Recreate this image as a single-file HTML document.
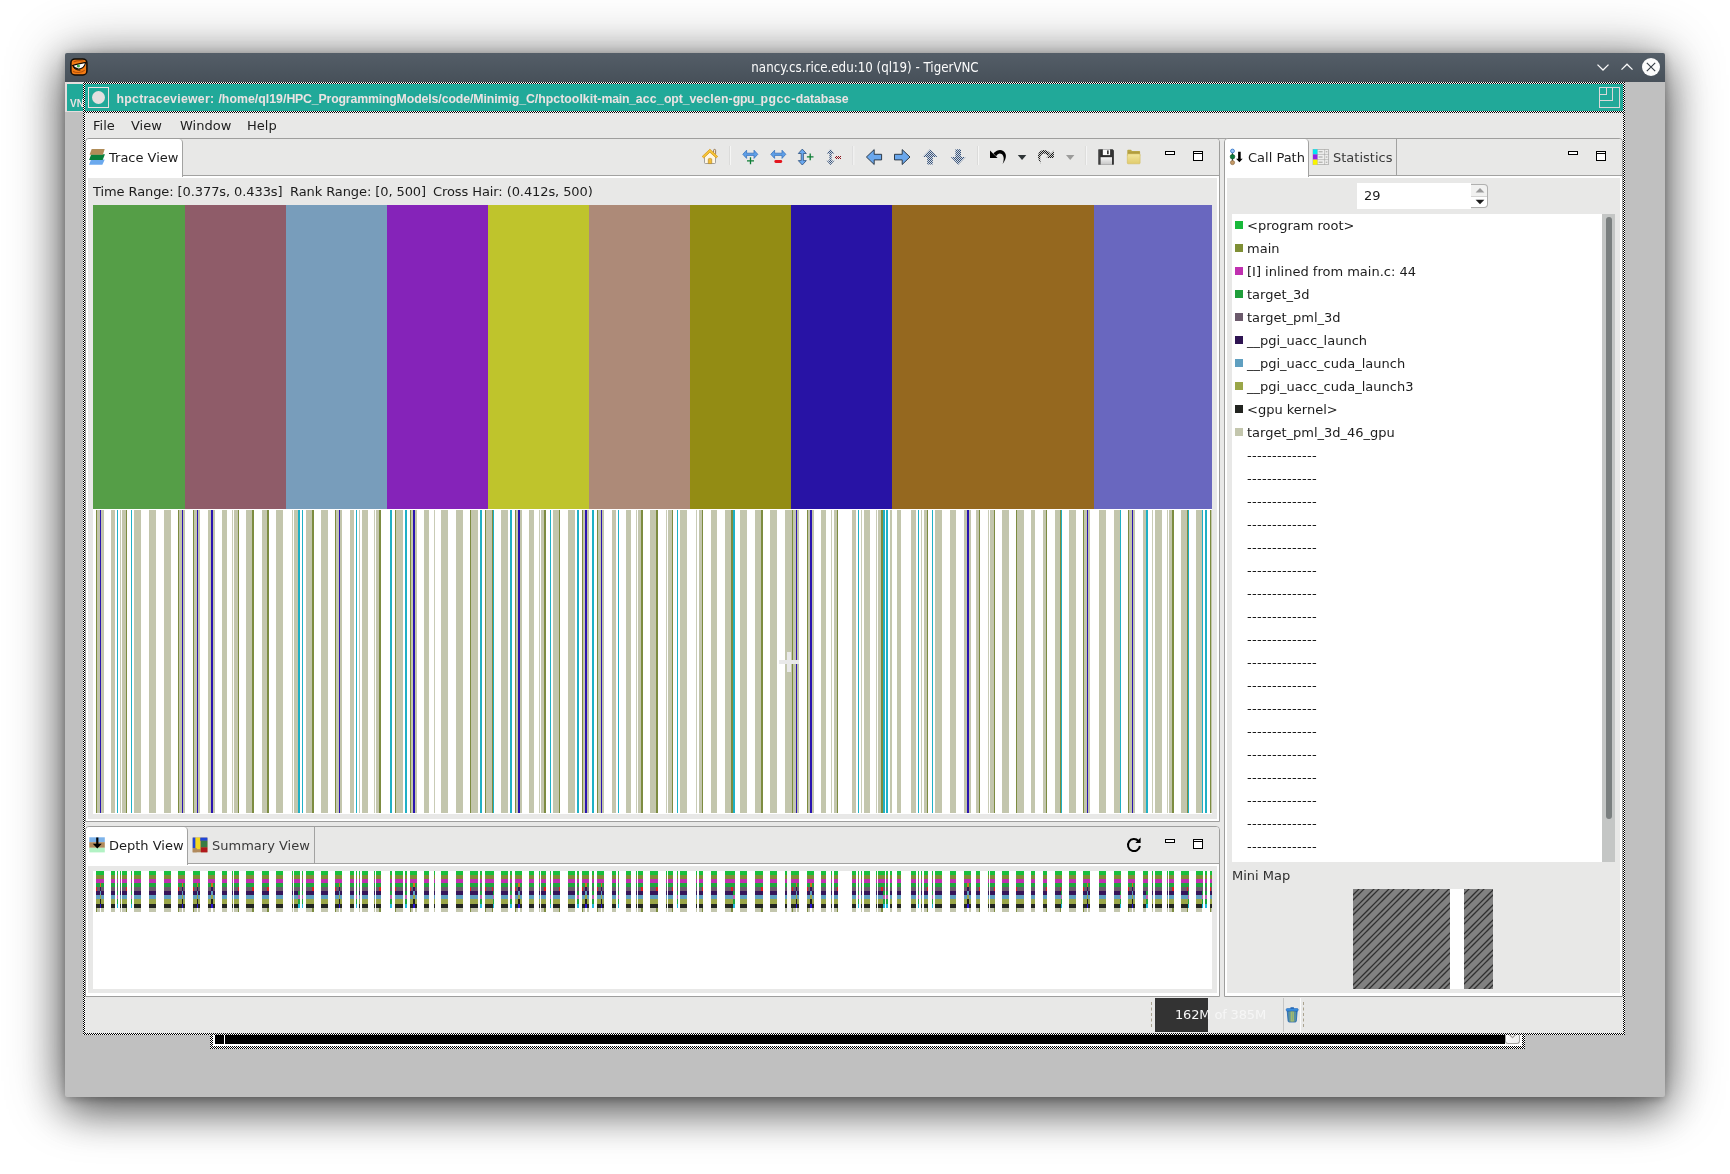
<!DOCTYPE html>
<html><head><meta charset="utf-8"><title>hpctraceviewer</title>
<style>
html,body{margin:0;padding:0}
body{width:1730px;height:1174px;position:relative;overflow:hidden;background:#fff;font-family:"DejaVu Sans","Liberation Sans",sans-serif;font-size:13px;line-height:16px;color:#1c1c1c}
.abs{position:absolute}
.t{position:absolute;white-space:nowrap;margin-top:1px}
.chk{position:absolute;background-image:conic-gradient(#000 25%,#fff 0 50%,#000 0 75%,#fff 0);background-size:2px 2px}
#win{left:65px;top:53px;width:1600px;height:1044px;background:#c0c0c0;border-radius:2px;box-shadow:0 3px 58px rgba(0,0,0,.42),0 14px 40px rgba(0,0,0,.5),0 2px 10px rgba(0,0,0,.25)}
#tbar{left:65px;top:53px;width:1600px;height:29px;border-radius:2px 2px 0 0;background:linear-gradient(#545e68,#475059)}
#ttl{left:65px;top:57px;width:1600px;text-align:center;color:#fcfcfc;font-family:"DejaVu Sans Condensed","Liberation Sans",sans-serif;font-size:13.2px;line-height:20px}
.teal{background:#21a999}
.panel{position:absolute;background:#fff;border:1px solid #9e9e9d;border-radius:4px 4px 0 0;box-sizing:border-box}
.bg{position:absolute;background:#e8e8e7}
.tabline{position:absolute;height:1px;background:#a2a2a1}
.tab{position:absolute;box-sizing:border-box;border-right:1px solid #a2a2a1}
.sq{position:absolute;width:8px;height:8px;left:1235px}
.li{position:absolute;left:1247px;white-space:nowrap;margin-top:1px}
.dash{position:absolute;left:1247px;white-space:nowrap;letter-spacing:.31px;margin-top:1px}
#root{position:absolute;left:0;top:0;width:1730px;height:1174px;will-change:transform}
</style></head><body><div id="root">
<div id="win" class="abs"></div>
<div id="tbar" class="abs"></div>
<div id="ttl" class="t">nancy.cs.rice.edu:10 (ql19) - TigerVNC</div>

<!-- VNC window icon -->
<svg class="abs" style="left:70px;top:58px" width="18" height="18" viewBox="0 0 18 18">
 <rect x="0.9" y="0.9" width="16" height="16" rx="4" fill="#f47c14" stroke="#120c06" stroke-width="1.5"/>
 <path d="M3 13.2 C6 15.2 11.6 15 14.8 12.2 M3.6 4 C6.4 2.6 10 2.4 13.6 3" fill="none" stroke="#b85208" stroke-width="1.1"/>
 <path d="M2.6 7.4 C6 6.2 11 5.6 15.8 4.4 C14.6 8.4 11.6 11.2 8.4 11 C6 10.8 3.8 9.4 2.6 7.4Z" fill="#fff" stroke="#120c06" stroke-width="1.1"/>
 <path d="M3.4 9.4 C5.4 11.6 8 12.4 10.4 12" fill="none" stroke="#120c06" stroke-width="1"/>
 <circle cx="8.4" cy="8" r="1.6" fill="#3cab46"/>
</svg>

<!-- title buttons -->
<svg class="abs" style="left:1590px;top:55px" width="74" height="25" viewBox="0 0 74 25">
 <path d="M7.5 9.6 L13 15 L18.5 9.6" fill="none" stroke="#fcfcfc" stroke-width="1.25"/>
 <path d="M31.5 14.6 L37 9.2 L42.5 14.6" fill="none" stroke="#fcfcfc" stroke-width="1.25"/>
 <circle cx="61" cy="12" r="9" fill="#fcfcfc"/>
 <path d="M56.8 7.8 L65.2 16.2 M65.2 7.8 L56.8 16.2" fill="none" stroke="#343c44" stroke-width="1.1"/>
</svg>

<!-- partial "VN" window at the left -->
<div class="abs" style="left:65px;top:82px;width:20px;height:30px;background:#e6dede"></div>
<div class="abs teal" style="left:67px;top:84px;width:18px;height:27px"></div>
<div class="t" style="left:70px;top:96px;width:13px;overflow:hidden;color:#ece3e3;font:bold 10px/14px 'Liberation Sans',sans-serif">VN</div>

<!-- inner app window -->
<div class="chk" style="left:83px;top:82px;width:1542px;height:953px"></div>
<div class="abs teal" style="left:85px;top:84px;width:1538px;height:27px"></div>
<div class="bg" style="left:85px;top:113px;width:1538px;height:920px"></div>
<!-- window menu button -->
<div class="abs" style="left:88px;top:87px;width:19px;height:19px;border:1px solid #e9e0e0"></div>
<div class="abs" style="left:92px;top:91px;width:13px;height:13px;border-radius:50%;background:#e4e0e0"></div>
<div class="t" style="left:116px;top:90px;width:740px;height:16px;color:#ece3e3;font:bold 12.3px/16px 'Liberation Sans',sans-serif"><span style="position:absolute;left:0.4px;letter-spacing:0.297px">hpctraceviewer:</span><span style="position:absolute;left:102.4px;letter-spacing:0.031px">/home/ql19/</span><span style="position:absolute;left:170.4px;letter-spacing:-0.178px">HPC_</span><span style="position:absolute;left:202.5px;letter-spacing:-0.168px">Programming</span><span style="position:absolute;left:280.6px;letter-spacing:-0.101px">Models/code/</span><span style="position:absolute;left:357.3px;letter-spacing:-0.069px">Minimig_C/</span><span style="position:absolute;left:422.2px;letter-spacing:0.041px">hpctoolkit-</span><span style="position:absolute;left:485.5px;letter-spacing:-0.269px">main_</span><span style="position:absolute;left:519.7px;letter-spacing:0.235px">acc_</span><span style="position:absolute;left:548.0px;letter-spacing:-0.142px">opt_</span><span style="position:absolute;left:573.4px;letter-spacing:0.144px">veclen-</span><span style="position:absolute;left:616.8px;letter-spacing:-0.394px">gpu_</span><span style="position:absolute;left:644.6px;letter-spacing:0.461px">pgcc-</span><span style="position:absolute;left:679.7px;letter-spacing:-0.054px">database</span></div>
<!-- maximize glyph -->
<svg class="abs" style="left:1599px;top:87px" width="22" height="22" viewBox="0 0 22 22" shape-rendering="crispEdges">
 <path d="M.5 .5H20.5V20.5H.5Z M7.5 .5V7.5H.5 M13.5 .5V13.5H.5" fill="none" stroke="#d9d9d9" stroke-width="1"/>
</svg>

<!-- menu bar -->
<div class="t" style="left:93px;top:117px">File</div>
<div class="t" style="left:131px;top:117px">View</div>
<div class="t" style="left:180px;top:117px">Window</div>
<div class="t" style="left:247px;top:117px">Help</div>

<!-- ===== Trace panel ===== -->
<div class="panel" style="left:85px;top:138px;width:1135px;height:684px"></div>
<div class="bg" style="left:86px;top:139px;width:1133px;height:36px;border-radius:3px 3px 0 0"></div>
<div class="tabline" style="left:86px;top:175px;width:1133px"></div>
<div class="bg" style="left:88px;top:178px;width:1129px;height:641px"></div>
<div class="tab" style="left:86px;top:139px;width:97px;height:38px;background:#fff;border-radius:4px 4px 0 0"></div>
<!-- trace view icon -->
<svg class="abs" style="left:88px;top:147px" width="19" height="19" viewBox="88 147 19 19">
 <path d="M91 159.6 H104.7 L102.4 164.8 H89.1Z" fill="#6ba9ee"/>
 <path d="M91.2 154.2 H104.9 L102.7 160 H89.1Z" fill="#07803c"/>
 <path d="M91.7 149 H104.7 L102.9 154.8 H89.5Z" fill="#b08c58"/>
</svg>
<div class="t" style="left:109px;top:149px">Trace View</div>
<svg class="abs" style="left:695px;top:140px" width="525" height="35" viewBox="695 140 525 35">
<defs>
<pattern id="dbl" width="2" height="2" patternUnits="userSpaceOnUse"><rect width="2" height="2" fill="#d4dbe4"/><rect width="1" height="1" fill="#3a5378"/><rect x="1" y="1" width="1" height="1" fill="#3a5378"/></pattern>
<pattern id="dbk" width="2" height="2" patternUnits="userSpaceOnUse"><rect width="1" height="1" fill="#000"/><rect x="1" y="1" width="1" height="1" fill="#000"/></pattern>
<pattern id="drd" width="2" height="2" patternUnits="userSpaceOnUse"><rect width="1" height="1" fill="#8c1018"/><rect x="1" y="1" width="1" height="1" fill="#8c1018"/></pattern>
</defs>
<!-- home -->
<rect x="713.6" y="149.4" width="2" height="5" rx=".9" fill="#fbeedc" stroke="#7d5c34" stroke-width=".8"/>
<path d="M704.5 156.6 L709.9 151.8 L715.5 156.6 V162.6 Q715.5 163.5 714.6 163.5 H705.4 Q704.5 163.5 704.5 162.6Z" fill="#fff7e4" stroke="#8b8b8b" stroke-width=".8"/>
<path d="M708.3 163.6 V159.6 Q708.3 158.4 709.5 158.4 H710.5 Q711.7 158.4 711.7 159.6 V163.6Z" fill="#f3bc34" stroke="#b48a2a" stroke-width=".7"/>
<path d="M702.2 156.5 L709.9 149.2 L717.7 156.5 L716.2 157.9 L709.9 152.2 L703.7 157.9Z" fill="#f5c737" stroke="#d9991f" stroke-width=".8" stroke-linejoin="round"/>
<rect x="729.0" y="146" width="1" height="19" fill="#dbdbda"/><rect x="730.0" y="146" width="1" height="19" fill="#f6f6f5"/>
<path d="M742.8 154.3 L746.5999999999999 150.20000000000002 V153.20000000000002 H754.0 V150.20000000000002 L757.8 154.3 L754.0 158.4 V155.4 H746.5999999999999 V158.4Z" fill="#5e9fe8" stroke="#3a74bc" stroke-width=".8" stroke-linejoin="round"/><path d="M747.0 160.8H754.0M750.5 157.3V164.3" stroke="#0c7d34" stroke-width="1.3" fill="none"/>
<path d="M770.8 154.3 L774.5999999999999 150.20000000000002 V153.20000000000002 H782.0 V150.20000000000002 L785.8 154.3 L782.0 158.4 V155.4 H774.5999999999999 V158.4Z" fill="#5e9fe8" stroke="#3a74bc" stroke-width=".8" stroke-linejoin="round"/><rect x="774.4" y="160.1" width="7.8" height="2.8" rx="1.3" fill="#e3161e"/>
<path d="M802.3 149.1 L806.3 153.5 H803.4 V160.6 H806.3 L802.3 165 L798.3 160.6 H801.1999999999999 V153.5 H798.3Z" fill="#6aa8f0" stroke="#2c4f7c" stroke-width=".8" stroke-linejoin="round"/><path d="M806.9000000000001 156.9H813.5M810.2 153.6V160.20000000000002" stroke="#0c7d34" stroke-width="1.3" fill="none"/>
<path d="M830.5 149.1 L834.5 153.5 H831.6 V160.6 H834.5 L830.5 165 L826.5 160.6 H829.4 V153.5 H826.5Z" fill="url(#dbl)" stroke="none" stroke-width=".8" stroke-linejoin="round"/><rect x="835" y="156" width="6" height="3" fill="url(#drd)"/>
<rect x="852.3" y="146" width="1" height="19" fill="#dbdbda"/><rect x="853.3" y="146" width="1" height="19" fill="#f6f6f5"/>
<path d="M866.4 157 L874.2 149.6 V154.3 H881.6 V159.9 H874.2 V164.5Z" fill="#6aa7ec" stroke="#232c38" stroke-width=".9" stroke-linejoin="miter"/>
<path d="M910 157 L902.2 149.6 V154.3 H894.5 V159.9 H902.2 V164.5Z" fill="#6aa7ec" stroke="#232c38" stroke-width=".9" stroke-linejoin="miter"/>
<path d="M930 149.3 L937.4 157 H932.8 V164.6 H927.2 V157 H922.6Z" fill="url(#dbl)"/>
<path d="M958.2 164.8 L965.6 157 H961 V149.2 H955.4 V157 H950.8Z" fill="url(#dbl)"/>
<rect x="977.0" y="146" width="1" height="19" fill="#dbdbda"/><rect x="978.0" y="146" width="1" height="19" fill="#f6f6f5"/>
<g id="undo"><path d="M990 150.4 V158.1 H997.6Z" fill="#000"/><path d="M993.4 153.6 C996 150.4 1000 149 1003.2 150.9 C1006.8 153.2 1007 158.2 1002.6 163.9 C1004.4 159.2 1004 155.6 1001.6 154 C999.6 152.8 997.6 153.8 996.2 156.2Z" fill="#000"/></g>
<path d="M1017.8 155 H1026.3 L1022.05 160.1Z" fill="#2e3436"/>
<g transform="translate(2043.9,0) scale(-1,1)"><path d="M990 150.4 V158.1 H997.6Z" fill="url(#dbk)"/><path d="M993.4 153.6 C996 150.4 1000 149 1003.2 150.9 C1006.8 153.2 1007 158.2 1002.6 163.9 C1004.4 159.2 1004 155.6 1001.6 154 C999.6 152.8 997.6 153.8 996.2 156.2Z" fill="url(#dbk)"/></g>
<path d="M1066 155 H1074.4 L1070.2 160.1Z" fill="#9b9b9a"/>
<rect x="1084.9" y="146" width="1" height="19" fill="#dbdbda"/><rect x="1085.9" y="146" width="1" height="19" fill="#f6f6f5"/>
<!-- save -->
<defs><linearGradient id="fl" x1="0" x2="1"><stop offset="0" stop-color="#4a4a4a"/><stop offset=".25" stop-color="#2a2a2a"/><stop offset="1" stop-color="#353535"/></linearGradient>
<linearGradient id="lb" x1="0" x2="0" y1="0" y2="1"><stop offset="0" stop-color="#f6f6f6"/><stop offset="1" stop-color="#c4c4c4"/></linearGradient>
<linearGradient id="fd" x1="0" x2="0" y1="0" y2="1"><stop offset="0" stop-color="#f3e69c"/><stop offset="1" stop-color="#e0cb6c"/></linearGradient></defs>
<path d="M1098.7 149.2 H1112.6 L1113.9 150.5 V164.2 Q1113.9 164.8 1113.3 164.8 H1098.8 Q1098.2 164.8 1098.2 164.2 V149.8 Q1098.2 149.2 1098.7 149.2Z" fill="url(#fl)"/>
<rect x="1102.8" y="149.4" width="7.3" height="5.7" fill="#fbfbfb"/>
<rect x="1107" y="150.4" width="1.7" height="3.8" fill="#3a3a3a"/>
<rect x="1100.6" y="157.2" width="11.4" height="7.6" fill="url(#lb)"/>
<!-- folder -->
<path d="M1127.3 150.6 Q1127.3 149.8 1128.1 149.8 H1131 L1132 151 H1139.4 Q1140.1 151 1140.1 151.8 V156 H1127.3Z" fill="#b9a645"/>
<path d="M1128.2 152.2 H1139.2 V155 H1128.2Z" fill="#a89436" opacity=".55"/>
<rect x="1127.3" y="153.9" width="12.8" height="9.9" rx=".8" fill="url(#fd)" stroke="#d2bc5e" stroke-width=".6"/>
<!-- min / max -->
<rect x="1165.5" y="151.5" width="9" height="3" fill="#fff" stroke="#000" stroke-width="1"/>
<rect x="1193.5" y="151.5" width="9" height="9" fill="#fff" stroke="#000" stroke-width="1"/>
<rect x="1193" y="153" width="10" height="1" fill="#000"/>
</svg>

<div class="t" style="left:93px;top:183px;letter-spacing:-.09px">Time Range: [0.377s, 0.433s]</div>
<div class="t" style="left:290px;top:183px;letter-spacing:-.09px">Rank Range: [0, 500]</div>
<div class="t" style="left:433px;top:183px;letter-spacing:-.09px">Cross Hair: (0.412s, 500)</div>

<!-- trace canvas -->
<div class="abs" style="left:93px;top:205px;width:1119px;height:609px;background:#fff"></div>
<div class="abs" style="left:93px;top:205px;width:92px;height:304px;background:#559e47"></div>
<div class="abs" style="left:185px;top:205px;width:101px;height:304px;background:#8f5c69"></div>
<div class="abs" style="left:286px;top:205px;width:101px;height:304px;background:#789dbb"></div>
<div class="abs" style="left:387px;top:205px;width:101px;height:304px;background:#8523b9"></div>
<div class="abs" style="left:488px;top:205px;width:101px;height:304px;background:#bfc42c"></div>
<div class="abs" style="left:589px;top:205px;width:101px;height:304px;background:#ad8a78"></div>
<div class="abs" style="left:690px;top:205px;width:101px;height:304px;background:#938c14"></div>
<div class="abs" style="left:791px;top:205px;width:101px;height:304px;background:#2813a5"></div>
<div class="abs" style="left:892px;top:205px;width:202px;height:304px;background:#95681f"></div>
<div class="abs" style="left:1094px;top:205px;width:118px;height:304px;background:#6967bf"></div>
<svg class="abs" style="left:93px;top:510px" width="1119" height="303" shape-rendering="crispEdges"><rect x="4" y="0" width="7" height="303" fill="#c3c6ad"/><rect x="18" y="0" width="4" height="303" fill="#c3c6ad"/><rect x="27" y="0" width="1" height="303" fill="#c9ccb6"/><rect x="29" y="0" width="4" height="303" fill="#c3c6ad"/><rect x="41" y="0" width="7" height="303" fill="#c3c6ad"/><rect x="56" y="0" width="7" height="303" fill="#c3c6ad"/><rect x="71" y="0" width="7" height="303" fill="#c3c6ad"/><rect x="86" y="0" width="6" height="303" fill="#c3c6ad"/><rect x="101" y="0" width="6" height="303" fill="#c3c6ad"/><rect x="115" y="0" width="7" height="303" fill="#c3c6ad"/><rect x="129" y="0" width="5" height="303" fill="#c3c6ad"/><rect x="139" y="0" width="1" height="303" fill="#c9ccb6"/><rect x="141" y="0" width="4" height="303" fill="#c3c6ad"/><rect x="153" y="0" width="6" height="303" fill="#c3c6ad"/><rect x="169" y="0" width="5" height="303" fill="#c3c6ad"/><rect x="183" y="0" width="7" height="303" fill="#c3c6ad"/><rect x="199" y="0" width="1" height="303" fill="#c9ccb6"/><rect x="201" y="0" width="4" height="303" fill="#c3c6ad"/><rect x="213" y="0" width="6" height="303" fill="#c3c6ad"/><rect x="228" y="0" width="7" height="303" fill="#c3c6ad"/><rect x="243" y="0" width="6" height="303" fill="#c3c6ad"/><rect x="257" y="0" width="4" height="303" fill="#c3c6ad"/><rect x="266" y="0" width="1" height="303" fill="#c9ccb6"/><rect x="269" y="0" width="6" height="303" fill="#c3c6ad"/><rect x="281" y="0" width="1" height="303" fill="#c9ccb6"/><rect x="283" y="0" width="3" height="303" fill="#c3c6ad"/><rect x="303" y="0" width="7" height="303" fill="#c3c6ad"/><rect x="318" y="0" width="6" height="303" fill="#c3c6ad"/><rect x="331" y="0" width="5" height="303" fill="#c3c6ad"/><rect x="341" y="0" width="1" height="303" fill="#c9ccb6"/><rect x="348" y="0" width="7" height="303" fill="#c3c6ad"/><rect x="363" y="0" width="7" height="303" fill="#c3c6ad"/><rect x="378" y="0" width="7" height="303" fill="#c3c6ad"/><rect x="393" y="0" width="6" height="303" fill="#c3c6ad"/><rect x="408" y="0" width="7" height="303" fill="#c3c6ad"/><rect x="423" y="0" width="6" height="303" fill="#c3c6ad"/><rect x="436" y="0" width="5" height="303" fill="#c3c6ad"/><rect x="446" y="0" width="1" height="303" fill="#c9ccb6"/><rect x="448" y="0" width="3" height="303" fill="#c3c6ad"/><rect x="460" y="0" width="6" height="303" fill="#c3c6ad"/><rect x="475" y="0" width="7" height="303" fill="#c3c6ad"/><rect x="490" y="0" width="6" height="303" fill="#c3c6ad"/><rect x="505" y="0" width="6" height="303" fill="#c3c6ad"/><rect x="519" y="0" width="4" height="303" fill="#c3c6ad"/><rect x="533" y="0" width="5" height="303" fill="#c3c6ad"/><rect x="543" y="0" width="1" height="303" fill="#c9ccb6"/><rect x="545" y="0" width="3" height="303" fill="#c3c6ad"/><rect x="557" y="0" width="6" height="303" fill="#c3c6ad"/><rect x="573" y="0" width="1" height="303" fill="#c9ccb6"/><rect x="575" y="0" width="4" height="303" fill="#c3c6ad"/><rect x="587" y="0" width="7" height="303" fill="#c3c6ad"/><rect x="603" y="0" width="1" height="303" fill="#c9ccb6"/><rect x="606" y="0" width="3" height="303" fill="#c3c6ad"/><rect x="618" y="0" width="6" height="303" fill="#c3c6ad"/><rect x="632" y="0" width="6" height="303" fill="#c3c6ad"/><rect x="647" y="0" width="7" height="303" fill="#c3c6ad"/><rect x="662" y="0" width="6" height="303" fill="#c3c6ad"/><rect x="677" y="0" width="7" height="303" fill="#c3c6ad"/><rect x="692" y="0" width="14" height="303" fill="#c3c6ad"/><rect x="715" y="0" width="6" height="303" fill="#c3c6ad"/><rect x="728" y="0" width="5" height="303" fill="#c3c6ad"/><rect x="738" y="0" width="1" height="303" fill="#c9ccb6"/><rect x="741" y="0" width="3" height="303" fill="#c3c6ad"/><rect x="759" y="0" width="4" height="303" fill="#c3c6ad"/><rect x="768" y="0" width="1" height="303" fill="#c9ccb6"/><rect x="771" y="0" width="6" height="303" fill="#c3c6ad"/><rect x="783" y="0" width="1" height="303" fill="#c9ccb6"/><rect x="785" y="0" width="3" height="303" fill="#c3c6ad"/><rect x="797" y="0" width="2" height="303" fill="#c3c6ad"/><rect x="804" y="0" width="4" height="303" fill="#c3c6ad"/><rect x="818" y="0" width="5" height="303" fill="#c3c6ad"/><rect x="828" y="0" width="1" height="303" fill="#c9ccb6"/><rect x="831" y="0" width="3" height="303" fill="#c3c6ad"/><rect x="842" y="0" width="7" height="303" fill="#c3c6ad"/><rect x="857" y="0" width="6" height="303" fill="#c3c6ad"/><rect x="871" y="0" width="7" height="303" fill="#c3c6ad"/><rect x="883" y="0" width="3" height="303" fill="#c3c6ad"/><rect x="895" y="0" width="1" height="303" fill="#c9ccb6"/><rect x="897" y="0" width="4" height="303" fill="#c3c6ad"/><rect x="909" y="0" width="7" height="303" fill="#c3c6ad"/><rect x="924" y="0" width="7" height="303" fill="#c3c6ad"/><rect x="938" y="0" width="4" height="303" fill="#c3c6ad"/><rect x="950" y="0" width="3" height="303" fill="#c3c6ad"/><rect x="962" y="0" width="5" height="303" fill="#c3c6ad"/><rect x="976" y="0" width="7" height="303" fill="#c3c6ad"/><rect x="991" y="0" width="6" height="303" fill="#c3c6ad"/><rect x="1006" y="0" width="7" height="303" fill="#c3c6ad"/><rect x="1021" y="0" width="6" height="303" fill="#c3c6ad"/><rect x="1036" y="0" width="6" height="303" fill="#c3c6ad"/><rect x="1050" y="0" width="3" height="303" fill="#c3c6ad"/><rect x="1059" y="0" width="1" height="303" fill="#c9ccb6"/><rect x="1062" y="0" width="7" height="303" fill="#c3c6ad"/><rect x="1074" y="0" width="1" height="303" fill="#c9ccb6"/><rect x="1076" y="0" width="3" height="303" fill="#c3c6ad"/><rect x="1088" y="0" width="6" height="303" fill="#c3c6ad"/><rect x="1103" y="0" width="6" height="303" fill="#c3c6ad"/><rect x="1118" y="0" width="1" height="303" fill="#c3c6ad"/><rect x="3" y="0" width="1" height="303" fill="#7d8c41"/><rect x="33" y="0" width="1" height="303" fill="#7d8c41"/><rect x="85" y="0" width="1" height="303" fill="#7d8c41"/><rect x="100" y="0" width="1" height="303" fill="#7d8c41"/><rect x="145" y="0" width="1" height="303" fill="#7d8c41"/><rect x="159" y="0" width="2" height="303" fill="#7d8c41"/><rect x="174" y="0" width="2" height="303" fill="#7d8c41"/><rect x="219" y="0" width="2" height="303" fill="#7d8c41"/><rect x="242" y="0" width="1" height="303" fill="#7d8c41"/><rect x="286" y="0" width="2" height="303" fill="#7d8c41"/><rect x="302" y="0" width="1" height="303" fill="#7d8c41"/><rect x="317" y="0" width="1" height="303" fill="#7d8c41"/><rect x="377" y="0" width="1" height="303" fill="#7d8c41"/><rect x="392" y="0" width="1" height="303" fill="#7d8c41"/><rect x="399" y="0" width="1" height="303" fill="#7d8c41"/><rect x="422" y="0" width="1" height="303" fill="#7d8c41"/><rect x="451" y="0" width="2" height="303" fill="#7d8c41"/><rect x="466" y="0" width="1" height="303" fill="#7d8c41"/><rect x="489" y="0" width="1" height="303" fill="#7d8c41"/><rect x="504" y="0" width="1" height="303" fill="#7d8c41"/><rect x="548" y="0" width="2" height="303" fill="#7d8c41"/><rect x="563" y="0" width="2" height="303" fill="#7d8c41"/><rect x="579" y="0" width="1" height="303" fill="#7d8c41"/><rect x="609" y="0" width="1" height="303" fill="#7d8c41"/><rect x="638" y="0" width="2" height="303" fill="#7d8c41"/><rect x="668" y="0" width="2" height="303" fill="#7d8c41"/><rect x="699" y="0" width="1" height="303" fill="#7d8c41"/><rect x="714" y="0" width="1" height="303" fill="#7d8c41"/><rect x="744" y="0" width="1" height="303" fill="#7d8c41"/><rect x="788" y="0" width="2" height="303" fill="#7d8c41"/><rect x="834" y="0" width="1" height="303" fill="#7d8c41"/><rect x="886" y="0" width="1" height="303" fill="#7d8c41"/><rect x="901" y="0" width="1" height="303" fill="#7d8c41"/><rect x="923" y="0" width="1" height="303" fill="#7d8c41"/><rect x="953" y="0" width="1" height="303" fill="#7d8c41"/><rect x="967" y="0" width="1" height="303" fill="#7d8c41"/><rect x="990" y="0" width="1" height="303" fill="#7d8c41"/><rect x="1035" y="0" width="1" height="303" fill="#7d8c41"/><rect x="1079" y="0" width="2" height="303" fill="#7d8c41"/><rect x="1094" y="0" width="1" height="303" fill="#7d8c41"/><rect x="1117" y="0" width="1" height="303" fill="#7d8c41"/><rect x="24" y="0" width="1" height="303" fill="#1fb0c5"/><rect x="38" y="0" width="1" height="303" fill="#1fb0c5"/><rect x="205" y="0" width="2" height="303" fill="#1fb0c5"/><rect x="209" y="0" width="1" height="303" fill="#1fb0c5"/><rect x="263" y="0" width="1" height="303" fill="#1fb0c5"/><rect x="297" y="0" width="2" height="303" fill="#1fb0c5"/><rect x="312" y="0" width="2" height="303" fill="#1fb0c5"/><rect x="387" y="0" width="2" height="303" fill="#1fb0c5"/><rect x="400" y="0" width="1" height="303" fill="#1fb0c5"/><rect x="417" y="0" width="2" height="303" fill="#1fb0c5"/><rect x="457" y="0" width="1" height="303" fill="#1fb0c5"/><rect x="484" y="0" width="2" height="303" fill="#1fb0c5"/><rect x="499" y="0" width="2" height="303" fill="#1fb0c5"/><rect x="525" y="0" width="1" height="303" fill="#1fb0c5"/><rect x="584" y="0" width="1" height="303" fill="#1fb0c5"/><rect x="640" y="0" width="2" height="303" fill="#1fb0c5"/><rect x="765" y="0" width="1" height="303" fill="#1fb0c5"/><rect x="790" y="0" width="2" height="303" fill="#1fb0c5"/><rect x="793" y="0" width="2" height="303" fill="#1fb0c5"/><rect x="825" y="0" width="1" height="303" fill="#1fb0c5"/><rect x="839" y="0" width="1" height="303" fill="#1fb0c5"/><rect x="968" y="0" width="1" height="303" fill="#1fb0c5"/><rect x="1027" y="0" width="1" height="303" fill="#1fb0c5"/><rect x="1053" y="0" width="2" height="303" fill="#1fb0c5"/><rect x="1095" y="0" width="1" height="303" fill="#1fb0c5"/><rect x="1109" y="0" width="1" height="303" fill="#1fb0c5"/><rect x="1112" y="0" width="2" height="303" fill="#1fb0c5"/><rect x="7" y="0" width="1" height="303" fill="#2a14b0"/><rect x="89" y="0" width="1" height="303" fill="#2a14b0"/><rect x="104" y="0" width="1" height="303" fill="#2a14b0"/><rect x="118" y="0" width="2" height="303" fill="#2a14b0"/><rect x="246" y="0" width="1" height="303" fill="#2a14b0"/><rect x="320" y="0" width="2" height="303" fill="#2a14b0"/><rect x="425" y="0" width="2" height="303" fill="#2a14b0"/><rect x="492" y="0" width="2" height="303" fill="#2a14b0"/><rect x="508" y="0" width="1" height="303" fill="#2a14b0"/><rect x="703" y="0" width="1" height="303" fill="#2a14b0"/><rect x="717" y="0" width="2" height="303" fill="#2a14b0"/><rect x="874" y="0" width="2" height="303" fill="#2a14b0"/><rect x="994" y="0" width="1" height="303" fill="#2a14b0"/><rect x="1039" y="0" width="1" height="303" fill="#2a14b0"/></svg>
<!-- crosshair -->
<div class="abs" style="left:787px;top:652px;width:4px;height:20px;background:#e9e9e9"></div>
<div class="abs" style="left:779px;top:660px;width:20px;height:4px;background:#e9e9e9"></div>

<div class="abs" style="left:1215px;top:138px;width:14px;height:1px;background:#a2a2a1"></div>
<!-- ===== Depth panel ===== -->
<div class="panel" style="left:85px;top:826px;width:1135px;height:171px"></div>
<div class="bg" style="left:86px;top:827px;width:1133px;height:36px;border-radius:3px 3px 0 0"></div>
<div class="tabline" style="left:86px;top:863px;width:1133px"></div>
<div class="bg" style="left:88px;top:866px;width:1129px;height:127px"></div>
<div class="tab" style="left:86px;top:827px;width:102px;height:38px;background:#fff;border-radius:4px 4px 0 0"></div>
<div class="tab" style="left:188px;top:827px;width:127px;height:36px"></div>
<svg class="abs" style="left:89px;top:837px" width="120" height="16" viewBox="89 837 120 16">
<rect x="89.3" y="837.3" width="15.5" height="5" fill="#7db3ea"/>
<rect x="89.3" y="842.2" width="15.5" height="5.6" fill="#b18a5c"/>
<rect x="89.3" y="847.8" width="15.5" height="4.6" fill="#b2f2c4"/>
<path d="M96.2 837.6 H98.4 V843.8 H101.8 L97.3 848.6 L92.8 843.8 H96.2Z" fill="#000"/>
<!-- summary -->
<rect x="192.7" y="837.6" width="14.7" height="14.7" fill="#b18a5c"/>
<rect x="192.7" y="837.6" width="2.8" height="10.4" fill="#1f46d8"/>
<rect x="195.5" y="837.6" width="4.8" height="11.6" fill="#f2d820"/>
<rect x="200.3" y="837.6" width="7.1" height="3.2" fill="#1f46d8"/>
<rect x="200.9" y="840.8" width="6.5" height="6.6" fill="#3a7c44"/>
<rect x="200.9" y="847.4" width="6.5" height="4.9" fill="#b0181c"/>
<rect x="192.7" y="848" width="4" height="4.3" fill="#b18a5c"/>
</svg><svg class="abs" style="left:1125px;top:836px" width="18" height="18" viewBox="1125 836 18 18">
<path d="M1138.4 841 A6 6 0 1 0 1139.9 846" fill="none" stroke="#000" stroke-width="2"/>
<path d="M1135.4 843 H1140.6 V837.6Z" fill="#000"/>
</svg><svg class="abs" style="left:1164px;top:838px" width="41" height="13" viewBox="1164 838 41 13">
<rect x="1165.5" y="839.5" width="9" height="3" fill="#fff" stroke="#000"/>
<rect x="1193.5" y="839.5" width="9" height="9" fill="#fff" stroke="#000"/><rect x="1193" y="841" width="10" height="1" fill="#000"/></svg>
<div class="t" style="left:109px;top:837px">Depth View</div>
<div class="t" style="left:212px;top:837px;color:#3a3a3a">Summary View</div>
<div class="abs" style="left:93px;top:871px;width:1119px;height:118px;background:#fff"></div>
<svg class="abs" style="left:93px;top:871px" width="1119" height="41" shape-rendering="crispEdges"><rect x="3" y="0" width="8" height="4" fill="#18c03c"/><rect x="18" y="0" width="4" height="4" fill="#18c03c"/><rect x="24" y="0" width="1" height="4" fill="#18c03c"/><rect x="27" y="0" width="1" height="4" fill="#18c03c"/><rect x="29" y="0" width="5" height="4" fill="#18c03c"/><rect x="38" y="0" width="1" height="4" fill="#18c03c"/><rect x="41" y="0" width="7" height="4" fill="#18c03c"/><rect x="56" y="0" width="7" height="4" fill="#18c03c"/><rect x="71" y="0" width="7" height="4" fill="#18c03c"/><rect x="85" y="0" width="7" height="4" fill="#18c03c"/><rect x="100" y="0" width="7" height="4" fill="#18c03c"/><rect x="115" y="0" width="7" height="4" fill="#18c03c"/><rect x="129" y="0" width="5" height="4" fill="#18c03c"/><rect x="139" y="0" width="1" height="4" fill="#18c03c"/><rect x="141" y="0" width="5" height="4" fill="#18c03c"/><rect x="153" y="0" width="8" height="4" fill="#18c03c"/><rect x="169" y="0" width="7" height="4" fill="#18c03c"/><rect x="183" y="0" width="7" height="4" fill="#18c03c"/><rect x="199" y="0" width="1" height="4" fill="#18c03c"/><rect x="201" y="0" width="6" height="4" fill="#18c03c"/><rect x="209" y="0" width="1" height="4" fill="#18c03c"/><rect x="213" y="0" width="8" height="4" fill="#18c03c"/><rect x="228" y="0" width="7" height="4" fill="#18c03c"/><rect x="242" y="0" width="7" height="4" fill="#18c03c"/><rect x="257" y="0" width="4" height="4" fill="#18c03c"/><rect x="263" y="0" width="1" height="4" fill="#18c03c"/><rect x="266" y="0" width="1" height="4" fill="#18c03c"/><rect x="269" y="0" width="6" height="4" fill="#18c03c"/><rect x="281" y="0" width="1" height="4" fill="#18c03c"/><rect x="283" y="0" width="5" height="4" fill="#18c03c"/><rect x="297" y="0" width="2" height="4" fill="#18c03c"/><rect x="302" y="0" width="8" height="4" fill="#18c03c"/><rect x="312" y="0" width="2" height="4" fill="#18c03c"/><rect x="317" y="0" width="7" height="4" fill="#18c03c"/><rect x="331" y="0" width="5" height="4" fill="#18c03c"/><rect x="341" y="0" width="1" height="4" fill="#18c03c"/><rect x="348" y="0" width="7" height="4" fill="#18c03c"/><rect x="363" y="0" width="7" height="4" fill="#18c03c"/><rect x="377" y="0" width="8" height="4" fill="#18c03c"/><rect x="387" y="0" width="2" height="4" fill="#18c03c"/><rect x="392" y="0" width="9" height="4" fill="#18c03c"/><rect x="408" y="0" width="7" height="4" fill="#18c03c"/><rect x="417" y="0" width="2" height="4" fill="#18c03c"/><rect x="422" y="0" width="7" height="4" fill="#18c03c"/><rect x="436" y="0" width="5" height="4" fill="#18c03c"/><rect x="446" y="0" width="1" height="4" fill="#18c03c"/><rect x="448" y="0" width="5" height="4" fill="#18c03c"/><rect x="457" y="0" width="1" height="4" fill="#18c03c"/><rect x="460" y="0" width="7" height="4" fill="#18c03c"/><rect x="475" y="0" width="7" height="4" fill="#18c03c"/><rect x="484" y="0" width="2" height="4" fill="#18c03c"/><rect x="489" y="0" width="7" height="4" fill="#18c03c"/><rect x="499" y="0" width="2" height="4" fill="#18c03c"/><rect x="504" y="0" width="7" height="4" fill="#18c03c"/><rect x="519" y="0" width="4" height="4" fill="#18c03c"/><rect x="525" y="0" width="1" height="4" fill="#18c03c"/><rect x="533" y="0" width="5" height="4" fill="#18c03c"/><rect x="543" y="0" width="1" height="4" fill="#18c03c"/><rect x="545" y="0" width="5" height="4" fill="#18c03c"/><rect x="557" y="0" width="8" height="4" fill="#18c03c"/><rect x="573" y="0" width="1" height="4" fill="#18c03c"/><rect x="575" y="0" width="5" height="4" fill="#18c03c"/><rect x="584" y="0" width="1" height="4" fill="#18c03c"/><rect x="587" y="0" width="7" height="4" fill="#18c03c"/><rect x="603" y="0" width="1" height="4" fill="#18c03c"/><rect x="606" y="0" width="4" height="4" fill="#18c03c"/><rect x="618" y="0" width="6" height="4" fill="#18c03c"/><rect x="632" y="0" width="10" height="4" fill="#18c03c"/><rect x="647" y="0" width="7" height="4" fill="#18c03c"/><rect x="662" y="0" width="8" height="4" fill="#18c03c"/><rect x="677" y="0" width="7" height="4" fill="#18c03c"/><rect x="692" y="0" width="14" height="4" fill="#18c03c"/><rect x="714" y="0" width="7" height="4" fill="#18c03c"/><rect x="728" y="0" width="5" height="4" fill="#18c03c"/><rect x="738" y="0" width="1" height="4" fill="#18c03c"/><rect x="741" y="0" width="4" height="4" fill="#18c03c"/><rect x="759" y="0" width="4" height="4" fill="#18c03c"/><rect x="765" y="0" width="1" height="4" fill="#18c03c"/><rect x="768" y="0" width="1" height="4" fill="#18c03c"/><rect x="771" y="0" width="6" height="4" fill="#18c03c"/><rect x="783" y="0" width="1" height="4" fill="#18c03c"/><rect x="785" y="0" width="7" height="4" fill="#18c03c"/><rect x="793" y="0" width="2" height="4" fill="#18c03c"/><rect x="797" y="0" width="2" height="4" fill="#18c03c"/><rect x="804" y="0" width="4" height="4" fill="#18c03c"/><rect x="818" y="0" width="5" height="4" fill="#18c03c"/><rect x="825" y="0" width="1" height="4" fill="#18c03c"/><rect x="828" y="0" width="1" height="4" fill="#18c03c"/><rect x="831" y="0" width="4" height="4" fill="#18c03c"/><rect x="839" y="0" width="1" height="4" fill="#18c03c"/><rect x="842" y="0" width="7" height="4" fill="#18c03c"/><rect x="857" y="0" width="6" height="4" fill="#18c03c"/><rect x="871" y="0" width="7" height="4" fill="#18c03c"/><rect x="883" y="0" width="4" height="4" fill="#18c03c"/><rect x="895" y="0" width="1" height="4" fill="#18c03c"/><rect x="897" y="0" width="5" height="4" fill="#18c03c"/><rect x="909" y="0" width="7" height="4" fill="#18c03c"/><rect x="923" y="0" width="8" height="4" fill="#18c03c"/><rect x="938" y="0" width="4" height="4" fill="#18c03c"/><rect x="950" y="0" width="4" height="4" fill="#18c03c"/><rect x="962" y="0" width="7" height="4" fill="#18c03c"/><rect x="976" y="0" width="7" height="4" fill="#18c03c"/><rect x="990" y="0" width="7" height="4" fill="#18c03c"/><rect x="1006" y="0" width="7" height="4" fill="#18c03c"/><rect x="1021" y="0" width="7" height="4" fill="#18c03c"/><rect x="1035" y="0" width="7" height="4" fill="#18c03c"/><rect x="1050" y="0" width="5" height="4" fill="#18c03c"/><rect x="1059" y="0" width="1" height="4" fill="#18c03c"/><rect x="1062" y="0" width="7" height="4" fill="#18c03c"/><rect x="1074" y="0" width="1" height="4" fill="#18c03c"/><rect x="1076" y="0" width="5" height="4" fill="#18c03c"/><rect x="1088" y="0" width="8" height="4" fill="#18c03c"/><rect x="1103" y="0" width="7" height="4" fill="#18c03c"/><rect x="1112" y="0" width="2" height="4" fill="#18c03c"/><rect x="1117" y="0" width="2" height="4" fill="#18c03c"/><rect x="3" y="4" width="8" height="4" fill="#7f8f35"/><rect x="18" y="4" width="4" height="4" fill="#7f8f35"/><rect x="24" y="4" width="1" height="4" fill="#7f8f35"/><rect x="27" y="4" width="1" height="4" fill="#7f8f35"/><rect x="29" y="4" width="5" height="4" fill="#7f8f35"/><rect x="38" y="4" width="1" height="4" fill="#7f8f35"/><rect x="41" y="4" width="7" height="4" fill="#7f8f35"/><rect x="56" y="4" width="7" height="4" fill="#7f8f35"/><rect x="71" y="4" width="7" height="4" fill="#7f8f35"/><rect x="85" y="4" width="7" height="4" fill="#7f8f35"/><rect x="100" y="4" width="7" height="4" fill="#7f8f35"/><rect x="115" y="4" width="7" height="4" fill="#7f8f35"/><rect x="129" y="4" width="5" height="4" fill="#7f8f35"/><rect x="139" y="4" width="1" height="4" fill="#7f8f35"/><rect x="141" y="4" width="5" height="4" fill="#7f8f35"/><rect x="153" y="4" width="8" height="4" fill="#7f8f35"/><rect x="169" y="4" width="7" height="4" fill="#7f8f35"/><rect x="183" y="4" width="7" height="4" fill="#7f8f35"/><rect x="199" y="4" width="1" height="4" fill="#7f8f35"/><rect x="201" y="4" width="6" height="4" fill="#7f8f35"/><rect x="209" y="4" width="1" height="4" fill="#7f8f35"/><rect x="213" y="4" width="8" height="4" fill="#7f8f35"/><rect x="228" y="4" width="7" height="4" fill="#7f8f35"/><rect x="242" y="4" width="7" height="4" fill="#7f8f35"/><rect x="257" y="4" width="4" height="4" fill="#7f8f35"/><rect x="263" y="4" width="1" height="4" fill="#7f8f35"/><rect x="266" y="4" width="1" height="4" fill="#7f8f35"/><rect x="269" y="4" width="6" height="4" fill="#7f8f35"/><rect x="281" y="4" width="1" height="4" fill="#7f8f35"/><rect x="283" y="4" width="5" height="4" fill="#7f8f35"/><rect x="297" y="4" width="2" height="4" fill="#7f8f35"/><rect x="302" y="4" width="8" height="4" fill="#7f8f35"/><rect x="312" y="4" width="2" height="4" fill="#7f8f35"/><rect x="317" y="4" width="7" height="4" fill="#7f8f35"/><rect x="331" y="4" width="5" height="4" fill="#7f8f35"/><rect x="341" y="4" width="1" height="4" fill="#7f8f35"/><rect x="348" y="4" width="7" height="4" fill="#7f8f35"/><rect x="363" y="4" width="7" height="4" fill="#7f8f35"/><rect x="377" y="4" width="8" height="4" fill="#7f8f35"/><rect x="387" y="4" width="2" height="4" fill="#7f8f35"/><rect x="392" y="4" width="9" height="4" fill="#7f8f35"/><rect x="408" y="4" width="7" height="4" fill="#7f8f35"/><rect x="417" y="4" width="2" height="4" fill="#7f8f35"/><rect x="422" y="4" width="7" height="4" fill="#7f8f35"/><rect x="436" y="4" width="5" height="4" fill="#7f8f35"/><rect x="446" y="4" width="1" height="4" fill="#7f8f35"/><rect x="448" y="4" width="5" height="4" fill="#7f8f35"/><rect x="457" y="4" width="1" height="4" fill="#7f8f35"/><rect x="460" y="4" width="7" height="4" fill="#7f8f35"/><rect x="475" y="4" width="7" height="4" fill="#7f8f35"/><rect x="484" y="4" width="2" height="4" fill="#7f8f35"/><rect x="489" y="4" width="7" height="4" fill="#7f8f35"/><rect x="499" y="4" width="2" height="4" fill="#7f8f35"/><rect x="504" y="4" width="7" height="4" fill="#7f8f35"/><rect x="519" y="4" width="4" height="4" fill="#7f8f35"/><rect x="525" y="4" width="1" height="4" fill="#7f8f35"/><rect x="533" y="4" width="5" height="4" fill="#7f8f35"/><rect x="543" y="4" width="1" height="4" fill="#7f8f35"/><rect x="545" y="4" width="5" height="4" fill="#7f8f35"/><rect x="557" y="4" width="8" height="4" fill="#7f8f35"/><rect x="573" y="4" width="1" height="4" fill="#7f8f35"/><rect x="575" y="4" width="5" height="4" fill="#7f8f35"/><rect x="584" y="4" width="1" height="4" fill="#7f8f35"/><rect x="587" y="4" width="7" height="4" fill="#7f8f35"/><rect x="603" y="4" width="1" height="4" fill="#7f8f35"/><rect x="606" y="4" width="4" height="4" fill="#7f8f35"/><rect x="618" y="4" width="6" height="4" fill="#7f8f35"/><rect x="632" y="4" width="10" height="4" fill="#7f8f35"/><rect x="647" y="4" width="7" height="4" fill="#7f8f35"/><rect x="662" y="4" width="8" height="4" fill="#7f8f35"/><rect x="677" y="4" width="7" height="4" fill="#7f8f35"/><rect x="692" y="4" width="14" height="4" fill="#7f8f35"/><rect x="714" y="4" width="7" height="4" fill="#7f8f35"/><rect x="728" y="4" width="5" height="4" fill="#7f8f35"/><rect x="738" y="4" width="1" height="4" fill="#7f8f35"/><rect x="741" y="4" width="4" height="4" fill="#7f8f35"/><rect x="759" y="4" width="4" height="4" fill="#7f8f35"/><rect x="765" y="4" width="1" height="4" fill="#7f8f35"/><rect x="768" y="4" width="1" height="4" fill="#7f8f35"/><rect x="771" y="4" width="6" height="4" fill="#7f8f35"/><rect x="783" y="4" width="1" height="4" fill="#7f8f35"/><rect x="785" y="4" width="7" height="4" fill="#7f8f35"/><rect x="793" y="4" width="2" height="4" fill="#7f8f35"/><rect x="797" y="4" width="2" height="4" fill="#7f8f35"/><rect x="804" y="4" width="4" height="4" fill="#7f8f35"/><rect x="818" y="4" width="5" height="4" fill="#7f8f35"/><rect x="825" y="4" width="1" height="4" fill="#7f8f35"/><rect x="828" y="4" width="1" height="4" fill="#7f8f35"/><rect x="831" y="4" width="4" height="4" fill="#7f8f35"/><rect x="839" y="4" width="1" height="4" fill="#7f8f35"/><rect x="842" y="4" width="7" height="4" fill="#7f8f35"/><rect x="857" y="4" width="6" height="4" fill="#7f8f35"/><rect x="871" y="4" width="7" height="4" fill="#7f8f35"/><rect x="883" y="4" width="4" height="4" fill="#7f8f35"/><rect x="895" y="4" width="1" height="4" fill="#7f8f35"/><rect x="897" y="4" width="5" height="4" fill="#7f8f35"/><rect x="909" y="4" width="7" height="4" fill="#7f8f35"/><rect x="923" y="4" width="8" height="4" fill="#7f8f35"/><rect x="938" y="4" width="4" height="4" fill="#7f8f35"/><rect x="950" y="4" width="4" height="4" fill="#7f8f35"/><rect x="962" y="4" width="7" height="4" fill="#7f8f35"/><rect x="976" y="4" width="7" height="4" fill="#7f8f35"/><rect x="990" y="4" width="7" height="4" fill="#7f8f35"/><rect x="1006" y="4" width="7" height="4" fill="#7f8f35"/><rect x="1021" y="4" width="7" height="4" fill="#7f8f35"/><rect x="1035" y="4" width="7" height="4" fill="#7f8f35"/><rect x="1050" y="4" width="5" height="4" fill="#7f8f35"/><rect x="1059" y="4" width="1" height="4" fill="#7f8f35"/><rect x="1062" y="4" width="7" height="4" fill="#7f8f35"/><rect x="1074" y="4" width="1" height="4" fill="#7f8f35"/><rect x="1076" y="4" width="5" height="4" fill="#7f8f35"/><rect x="1088" y="4" width="8" height="4" fill="#7f8f35"/><rect x="1103" y="4" width="7" height="4" fill="#7f8f35"/><rect x="1112" y="4" width="2" height="4" fill="#7f8f35"/><rect x="1117" y="4" width="2" height="4" fill="#7f8f35"/><rect x="3" y="8" width="8" height="4" fill="#c030b0"/><rect x="18" y="8" width="4" height="4" fill="#c030b0"/><rect x="24" y="8" width="1" height="4" fill="#c030b0"/><rect x="27" y="8" width="1" height="4" fill="#c030b0"/><rect x="29" y="8" width="5" height="4" fill="#c030b0"/><rect x="38" y="8" width="1" height="4" fill="#c030b0"/><rect x="41" y="8" width="7" height="4" fill="#c030b0"/><rect x="56" y="8" width="7" height="4" fill="#c030b0"/><rect x="71" y="8" width="7" height="4" fill="#c030b0"/><rect x="85" y="8" width="7" height="4" fill="#c030b0"/><rect x="100" y="8" width="7" height="4" fill="#c030b0"/><rect x="115" y="8" width="7" height="4" fill="#c030b0"/><rect x="129" y="8" width="5" height="4" fill="#c030b0"/><rect x="139" y="8" width="1" height="4" fill="#c030b0"/><rect x="141" y="8" width="5" height="4" fill="#c030b0"/><rect x="153" y="8" width="8" height="4" fill="#c030b0"/><rect x="169" y="8" width="7" height="4" fill="#c030b0"/><rect x="183" y="8" width="7" height="4" fill="#c030b0"/><rect x="199" y="8" width="1" height="4" fill="#c030b0"/><rect x="201" y="8" width="6" height="4" fill="#c030b0"/><rect x="209" y="8" width="1" height="4" fill="#c030b0"/><rect x="213" y="8" width="8" height="4" fill="#c030b0"/><rect x="228" y="8" width="7" height="4" fill="#c030b0"/><rect x="242" y="8" width="7" height="4" fill="#c030b0"/><rect x="257" y="8" width="4" height="4" fill="#c030b0"/><rect x="263" y="8" width="1" height="4" fill="#c030b0"/><rect x="266" y="8" width="1" height="4" fill="#c030b0"/><rect x="269" y="8" width="6" height="4" fill="#c030b0"/><rect x="281" y="8" width="1" height="4" fill="#c030b0"/><rect x="283" y="8" width="5" height="4" fill="#c030b0"/><rect x="297" y="8" width="2" height="4" fill="#c030b0"/><rect x="302" y="8" width="8" height="4" fill="#c030b0"/><rect x="312" y="8" width="2" height="4" fill="#c030b0"/><rect x="317" y="8" width="7" height="4" fill="#c030b0"/><rect x="331" y="8" width="5" height="4" fill="#c030b0"/><rect x="341" y="8" width="1" height="4" fill="#c030b0"/><rect x="348" y="8" width="7" height="4" fill="#c030b0"/><rect x="363" y="8" width="7" height="4" fill="#c030b0"/><rect x="377" y="8" width="8" height="4" fill="#c030b0"/><rect x="387" y="8" width="2" height="4" fill="#c030b0"/><rect x="392" y="8" width="9" height="4" fill="#c030b0"/><rect x="408" y="8" width="7" height="4" fill="#c030b0"/><rect x="417" y="8" width="2" height="4" fill="#c030b0"/><rect x="422" y="8" width="7" height="4" fill="#c030b0"/><rect x="436" y="8" width="5" height="4" fill="#c030b0"/><rect x="446" y="8" width="1" height="4" fill="#c030b0"/><rect x="448" y="8" width="5" height="4" fill="#c030b0"/><rect x="457" y="8" width="1" height="4" fill="#c030b0"/><rect x="460" y="8" width="7" height="4" fill="#c030b0"/><rect x="475" y="8" width="7" height="4" fill="#c030b0"/><rect x="484" y="8" width="2" height="4" fill="#c030b0"/><rect x="489" y="8" width="7" height="4" fill="#c030b0"/><rect x="499" y="8" width="2" height="4" fill="#c030b0"/><rect x="504" y="8" width="7" height="4" fill="#c030b0"/><rect x="519" y="8" width="4" height="4" fill="#c030b0"/><rect x="525" y="8" width="1" height="4" fill="#c030b0"/><rect x="533" y="8" width="5" height="4" fill="#c030b0"/><rect x="543" y="8" width="1" height="4" fill="#c030b0"/><rect x="545" y="8" width="5" height="4" fill="#c030b0"/><rect x="557" y="8" width="8" height="4" fill="#c030b0"/><rect x="573" y="8" width="1" height="4" fill="#c030b0"/><rect x="575" y="8" width="5" height="4" fill="#c030b0"/><rect x="584" y="8" width="1" height="4" fill="#c030b0"/><rect x="587" y="8" width="7" height="4" fill="#c030b0"/><rect x="603" y="8" width="1" height="4" fill="#c030b0"/><rect x="606" y="8" width="4" height="4" fill="#c030b0"/><rect x="618" y="8" width="6" height="4" fill="#c030b0"/><rect x="632" y="8" width="10" height="4" fill="#c030b0"/><rect x="647" y="8" width="7" height="4" fill="#c030b0"/><rect x="662" y="8" width="8" height="4" fill="#c030b0"/><rect x="677" y="8" width="7" height="4" fill="#c030b0"/><rect x="692" y="8" width="14" height="4" fill="#c030b0"/><rect x="714" y="8" width="7" height="4" fill="#c030b0"/><rect x="728" y="8" width="5" height="4" fill="#c030b0"/><rect x="738" y="8" width="1" height="4" fill="#c030b0"/><rect x="741" y="8" width="4" height="4" fill="#c030b0"/><rect x="759" y="8" width="4" height="4" fill="#c030b0"/><rect x="765" y="8" width="1" height="4" fill="#c030b0"/><rect x="768" y="8" width="1" height="4" fill="#c030b0"/><rect x="771" y="8" width="6" height="4" fill="#c030b0"/><rect x="783" y="8" width="1" height="4" fill="#c030b0"/><rect x="785" y="8" width="7" height="4" fill="#c030b0"/><rect x="793" y="8" width="2" height="4" fill="#c030b0"/><rect x="797" y="8" width="2" height="4" fill="#c030b0"/><rect x="804" y="8" width="4" height="4" fill="#c030b0"/><rect x="818" y="8" width="5" height="4" fill="#c030b0"/><rect x="825" y="8" width="1" height="4" fill="#c030b0"/><rect x="828" y="8" width="1" height="4" fill="#c030b0"/><rect x="831" y="8" width="4" height="4" fill="#c030b0"/><rect x="839" y="8" width="1" height="4" fill="#c030b0"/><rect x="842" y="8" width="7" height="4" fill="#c030b0"/><rect x="857" y="8" width="6" height="4" fill="#c030b0"/><rect x="871" y="8" width="7" height="4" fill="#c030b0"/><rect x="883" y="8" width="4" height="4" fill="#c030b0"/><rect x="895" y="8" width="1" height="4" fill="#c030b0"/><rect x="897" y="8" width="5" height="4" fill="#c030b0"/><rect x="909" y="8" width="7" height="4" fill="#c030b0"/><rect x="923" y="8" width="8" height="4" fill="#c030b0"/><rect x="938" y="8" width="4" height="4" fill="#c030b0"/><rect x="950" y="8" width="4" height="4" fill="#c030b0"/><rect x="962" y="8" width="7" height="4" fill="#c030b0"/><rect x="976" y="8" width="7" height="4" fill="#c030b0"/><rect x="990" y="8" width="7" height="4" fill="#c030b0"/><rect x="1006" y="8" width="7" height="4" fill="#c030b0"/><rect x="1021" y="8" width="7" height="4" fill="#c030b0"/><rect x="1035" y="8" width="7" height="4" fill="#c030b0"/><rect x="1050" y="8" width="5" height="4" fill="#c030b0"/><rect x="1059" y="8" width="1" height="4" fill="#c030b0"/><rect x="1062" y="8" width="7" height="4" fill="#c030b0"/><rect x="1074" y="8" width="1" height="4" fill="#c030b0"/><rect x="1076" y="8" width="5" height="4" fill="#c030b0"/><rect x="1088" y="8" width="8" height="4" fill="#c030b0"/><rect x="1103" y="8" width="7" height="4" fill="#c030b0"/><rect x="1112" y="8" width="2" height="4" fill="#c030b0"/><rect x="1117" y="8" width="2" height="4" fill="#c030b0"/><rect x="3" y="12" width="4" height="4" fill="#1fa63e"/><rect x="7" y="12" width="1" height="4" fill="#d07020"/><rect x="8" y="12" width="3" height="4" fill="#1fa63e"/><rect x="18" y="12" width="4" height="4" fill="#1fa63e"/><rect x="24" y="12" width="1" height="4" fill="#1fa63e"/><rect x="27" y="12" width="1" height="4" fill="#1fa63e"/><rect x="29" y="12" width="5" height="4" fill="#1fa63e"/><rect x="38" y="12" width="1" height="4" fill="#1fa63e"/><rect x="41" y="12" width="7" height="4" fill="#1fa63e"/><rect x="56" y="12" width="7" height="4" fill="#1fa63e"/><rect x="71" y="12" width="7" height="4" fill="#1fa63e"/><rect x="85" y="12" width="4" height="4" fill="#1fa63e"/><rect x="89" y="12" width="1" height="4" fill="#d07020"/><rect x="90" y="12" width="2" height="4" fill="#1fa63e"/><rect x="100" y="12" width="4" height="4" fill="#1fa63e"/><rect x="104" y="12" width="1" height="4" fill="#d07020"/><rect x="105" y="12" width="2" height="4" fill="#1fa63e"/><rect x="115" y="12" width="3" height="4" fill="#1fa63e"/><rect x="118" y="12" width="2" height="4" fill="#d07020"/><rect x="120" y="12" width="2" height="4" fill="#1fa63e"/><rect x="129" y="12" width="5" height="4" fill="#1fa63e"/><rect x="139" y="12" width="1" height="4" fill="#1fa63e"/><rect x="141" y="12" width="5" height="4" fill="#1fa63e"/><rect x="153" y="12" width="8" height="4" fill="#1fa63e"/><rect x="169" y="12" width="7" height="4" fill="#1fa63e"/><rect x="183" y="12" width="7" height="4" fill="#1fa63e"/><rect x="199" y="12" width="1" height="4" fill="#1fa63e"/><rect x="201" y="12" width="6" height="4" fill="#1fa63e"/><rect x="209" y="12" width="1" height="4" fill="#1fa63e"/><rect x="213" y="12" width="8" height="4" fill="#1fa63e"/><rect x="228" y="12" width="7" height="4" fill="#1fa63e"/><rect x="242" y="12" width="4" height="4" fill="#1fa63e"/><rect x="246" y="12" width="1" height="4" fill="#d07020"/><rect x="247" y="12" width="2" height="4" fill="#1fa63e"/><rect x="257" y="12" width="4" height="4" fill="#1fa63e"/><rect x="263" y="12" width="1" height="4" fill="#1fa63e"/><rect x="266" y="12" width="1" height="4" fill="#1fa63e"/><rect x="269" y="12" width="6" height="4" fill="#1fa63e"/><rect x="281" y="12" width="1" height="4" fill="#1fa63e"/><rect x="283" y="12" width="5" height="4" fill="#1fa63e"/><rect x="297" y="12" width="2" height="4" fill="#1fa63e"/><rect x="302" y="12" width="8" height="4" fill="#1fa63e"/><rect x="312" y="12" width="2" height="4" fill="#1fa63e"/><rect x="317" y="12" width="3" height="4" fill="#1fa63e"/><rect x="320" y="12" width="2" height="4" fill="#d07020"/><rect x="322" y="12" width="2" height="4" fill="#1fa63e"/><rect x="331" y="12" width="5" height="4" fill="#1fa63e"/><rect x="341" y="12" width="1" height="4" fill="#1fa63e"/><rect x="348" y="12" width="7" height="4" fill="#1fa63e"/><rect x="363" y="12" width="7" height="4" fill="#1fa63e"/><rect x="377" y="12" width="8" height="4" fill="#1fa63e"/><rect x="387" y="12" width="2" height="4" fill="#1fa63e"/><rect x="392" y="12" width="9" height="4" fill="#1fa63e"/><rect x="408" y="12" width="7" height="4" fill="#1fa63e"/><rect x="417" y="12" width="2" height="4" fill="#1fa63e"/><rect x="422" y="12" width="3" height="4" fill="#1fa63e"/><rect x="425" y="12" width="2" height="4" fill="#d07020"/><rect x="427" y="12" width="2" height="4" fill="#1fa63e"/><rect x="436" y="12" width="5" height="4" fill="#1fa63e"/><rect x="446" y="12" width="1" height="4" fill="#1fa63e"/><rect x="448" y="12" width="5" height="4" fill="#1fa63e"/><rect x="457" y="12" width="1" height="4" fill="#1fa63e"/><rect x="460" y="12" width="7" height="4" fill="#1fa63e"/><rect x="475" y="12" width="7" height="4" fill="#1fa63e"/><rect x="484" y="12" width="2" height="4" fill="#1fa63e"/><rect x="489" y="12" width="3" height="4" fill="#1fa63e"/><rect x="492" y="12" width="2" height="4" fill="#d07020"/><rect x="494" y="12" width="2" height="4" fill="#1fa63e"/><rect x="499" y="12" width="2" height="4" fill="#1fa63e"/><rect x="504" y="12" width="4" height="4" fill="#1fa63e"/><rect x="508" y="12" width="1" height="4" fill="#d07020"/><rect x="509" y="12" width="2" height="4" fill="#1fa63e"/><rect x="519" y="12" width="4" height="4" fill="#1fa63e"/><rect x="525" y="12" width="1" height="4" fill="#1fa63e"/><rect x="533" y="12" width="5" height="4" fill="#1fa63e"/><rect x="543" y="12" width="1" height="4" fill="#1fa63e"/><rect x="545" y="12" width="5" height="4" fill="#1fa63e"/><rect x="557" y="12" width="8" height="4" fill="#1fa63e"/><rect x="573" y="12" width="1" height="4" fill="#1fa63e"/><rect x="575" y="12" width="5" height="4" fill="#1fa63e"/><rect x="584" y="12" width="1" height="4" fill="#1fa63e"/><rect x="587" y="12" width="7" height="4" fill="#1fa63e"/><rect x="603" y="12" width="1" height="4" fill="#1fa63e"/><rect x="606" y="12" width="4" height="4" fill="#1fa63e"/><rect x="618" y="12" width="6" height="4" fill="#1fa63e"/><rect x="632" y="12" width="10" height="4" fill="#1fa63e"/><rect x="647" y="12" width="7" height="4" fill="#1fa63e"/><rect x="662" y="12" width="8" height="4" fill="#1fa63e"/><rect x="677" y="12" width="7" height="4" fill="#1fa63e"/><rect x="692" y="12" width="11" height="4" fill="#1fa63e"/><rect x="703" y="12" width="1" height="4" fill="#d07020"/><rect x="704" y="12" width="2" height="4" fill="#1fa63e"/><rect x="714" y="12" width="3" height="4" fill="#1fa63e"/><rect x="717" y="12" width="2" height="4" fill="#d07020"/><rect x="719" y="12" width="2" height="4" fill="#1fa63e"/><rect x="728" y="12" width="5" height="4" fill="#1fa63e"/><rect x="738" y="12" width="1" height="4" fill="#1fa63e"/><rect x="741" y="12" width="4" height="4" fill="#1fa63e"/><rect x="759" y="12" width="4" height="4" fill="#1fa63e"/><rect x="765" y="12" width="1" height="4" fill="#1fa63e"/><rect x="768" y="12" width="1" height="4" fill="#1fa63e"/><rect x="771" y="12" width="6" height="4" fill="#1fa63e"/><rect x="783" y="12" width="1" height="4" fill="#1fa63e"/><rect x="785" y="12" width="7" height="4" fill="#1fa63e"/><rect x="793" y="12" width="2" height="4" fill="#1fa63e"/><rect x="797" y="12" width="2" height="4" fill="#1fa63e"/><rect x="804" y="12" width="4" height="4" fill="#1fa63e"/><rect x="818" y="12" width="5" height="4" fill="#1fa63e"/><rect x="825" y="12" width="1" height="4" fill="#1fa63e"/><rect x="828" y="12" width="1" height="4" fill="#1fa63e"/><rect x="831" y="12" width="4" height="4" fill="#1fa63e"/><rect x="839" y="12" width="1" height="4" fill="#1fa63e"/><rect x="842" y="12" width="7" height="4" fill="#1fa63e"/><rect x="857" y="12" width="6" height="4" fill="#1fa63e"/><rect x="871" y="12" width="3" height="4" fill="#1fa63e"/><rect x="874" y="12" width="2" height="4" fill="#d07020"/><rect x="876" y="12" width="2" height="4" fill="#1fa63e"/><rect x="883" y="12" width="4" height="4" fill="#1fa63e"/><rect x="895" y="12" width="1" height="4" fill="#1fa63e"/><rect x="897" y="12" width="5" height="4" fill="#1fa63e"/><rect x="909" y="12" width="7" height="4" fill="#1fa63e"/><rect x="923" y="12" width="8" height="4" fill="#1fa63e"/><rect x="938" y="12" width="4" height="4" fill="#1fa63e"/><rect x="950" y="12" width="4" height="4" fill="#1fa63e"/><rect x="962" y="12" width="7" height="4" fill="#1fa63e"/><rect x="976" y="12" width="7" height="4" fill="#1fa63e"/><rect x="990" y="12" width="4" height="4" fill="#1fa63e"/><rect x="994" y="12" width="1" height="4" fill="#d07020"/><rect x="995" y="12" width="2" height="4" fill="#1fa63e"/><rect x="1006" y="12" width="7" height="4" fill="#1fa63e"/><rect x="1021" y="12" width="7" height="4" fill="#1fa63e"/><rect x="1035" y="12" width="4" height="4" fill="#1fa63e"/><rect x="1039" y="12" width="1" height="4" fill="#d07020"/><rect x="1040" y="12" width="2" height="4" fill="#1fa63e"/><rect x="1050" y="12" width="5" height="4" fill="#1fa63e"/><rect x="1059" y="12" width="1" height="4" fill="#1fa63e"/><rect x="1062" y="12" width="7" height="4" fill="#1fa63e"/><rect x="1074" y="12" width="1" height="4" fill="#1fa63e"/><rect x="1076" y="12" width="5" height="4" fill="#1fa63e"/><rect x="1088" y="12" width="8" height="4" fill="#1fa63e"/><rect x="1103" y="12" width="7" height="4" fill="#1fa63e"/><rect x="1112" y="12" width="2" height="4" fill="#1fa63e"/><rect x="1117" y="12" width="2" height="4" fill="#1fa63e"/><rect x="3" y="16" width="1" height="4" fill="#e02020"/><rect x="4" y="16" width="3" height="4" fill="#6b5a6b"/><rect x="7" y="16" width="1" height="4" fill="#35155a"/><rect x="8" y="16" width="3" height="4" fill="#6b5a6b"/><rect x="18" y="16" width="4" height="4" fill="#6b5a6b"/><rect x="24" y="16" width="1" height="4" fill="#6b5a6b"/><rect x="27" y="16" width="1" height="4" fill="#6b5a6b"/><rect x="29" y="16" width="4" height="4" fill="#6b5a6b"/><rect x="33" y="16" width="1" height="4" fill="#e02020"/><rect x="38" y="16" width="1" height="4" fill="#6b5a6b"/><rect x="41" y="16" width="7" height="4" fill="#6b5a6b"/><rect x="56" y="16" width="7" height="4" fill="#6b5a6b"/><rect x="71" y="16" width="7" height="4" fill="#6b5a6b"/><rect x="85" y="16" width="1" height="4" fill="#e02020"/><rect x="86" y="16" width="3" height="4" fill="#6b5a6b"/><rect x="89" y="16" width="1" height="4" fill="#35155a"/><rect x="90" y="16" width="2" height="4" fill="#6b5a6b"/><rect x="100" y="16" width="1" height="4" fill="#e02020"/><rect x="101" y="16" width="3" height="4" fill="#6b5a6b"/><rect x="104" y="16" width="1" height="4" fill="#35155a"/><rect x="105" y="16" width="2" height="4" fill="#6b5a6b"/><rect x="115" y="16" width="3" height="4" fill="#6b5a6b"/><rect x="118" y="16" width="2" height="4" fill="#35155a"/><rect x="120" y="16" width="2" height="4" fill="#6b5a6b"/><rect x="129" y="16" width="5" height="4" fill="#6b5a6b"/><rect x="139" y="16" width="1" height="4" fill="#6b5a6b"/><rect x="141" y="16" width="4" height="4" fill="#6b5a6b"/><rect x="145" y="16" width="1" height="4" fill="#e02020"/><rect x="153" y="16" width="6" height="4" fill="#6b5a6b"/><rect x="159" y="16" width="2" height="4" fill="#e02020"/><rect x="169" y="16" width="5" height="4" fill="#6b5a6b"/><rect x="174" y="16" width="2" height="4" fill="#e02020"/><rect x="183" y="16" width="7" height="4" fill="#6b5a6b"/><rect x="199" y="16" width="1" height="4" fill="#6b5a6b"/><rect x="201" y="16" width="6" height="4" fill="#6b5a6b"/><rect x="209" y="16" width="1" height="4" fill="#6b5a6b"/><rect x="213" y="16" width="6" height="4" fill="#6b5a6b"/><rect x="219" y="16" width="2" height="4" fill="#e02020"/><rect x="228" y="16" width="7" height="4" fill="#6b5a6b"/><rect x="242" y="16" width="1" height="4" fill="#e02020"/><rect x="243" y="16" width="3" height="4" fill="#6b5a6b"/><rect x="246" y="16" width="1" height="4" fill="#35155a"/><rect x="247" y="16" width="2" height="4" fill="#6b5a6b"/><rect x="257" y="16" width="4" height="4" fill="#6b5a6b"/><rect x="263" y="16" width="1" height="4" fill="#6b5a6b"/><rect x="266" y="16" width="1" height="4" fill="#6b5a6b"/><rect x="269" y="16" width="6" height="4" fill="#6b5a6b"/><rect x="281" y="16" width="1" height="4" fill="#6b5a6b"/><rect x="283" y="16" width="3" height="4" fill="#6b5a6b"/><rect x="286" y="16" width="2" height="4" fill="#e02020"/><rect x="297" y="16" width="2" height="4" fill="#6b5a6b"/><rect x="302" y="16" width="1" height="4" fill="#e02020"/><rect x="303" y="16" width="7" height="4" fill="#6b5a6b"/><rect x="312" y="16" width="2" height="4" fill="#6b5a6b"/><rect x="317" y="16" width="1" height="4" fill="#e02020"/><rect x="318" y="16" width="2" height="4" fill="#6b5a6b"/><rect x="320" y="16" width="2" height="4" fill="#35155a"/><rect x="322" y="16" width="2" height="4" fill="#6b5a6b"/><rect x="331" y="16" width="5" height="4" fill="#6b5a6b"/><rect x="341" y="16" width="1" height="4" fill="#6b5a6b"/><rect x="348" y="16" width="7" height="4" fill="#6b5a6b"/><rect x="363" y="16" width="7" height="4" fill="#6b5a6b"/><rect x="377" y="16" width="1" height="4" fill="#e02020"/><rect x="378" y="16" width="7" height="4" fill="#6b5a6b"/><rect x="387" y="16" width="2" height="4" fill="#6b5a6b"/><rect x="392" y="16" width="1" height="4" fill="#e02020"/><rect x="393" y="16" width="6" height="4" fill="#6b5a6b"/><rect x="399" y="16" width="1" height="4" fill="#e02020"/><rect x="400" y="16" width="1" height="4" fill="#6b5a6b"/><rect x="408" y="16" width="7" height="4" fill="#6b5a6b"/><rect x="417" y="16" width="2" height="4" fill="#6b5a6b"/><rect x="422" y="16" width="1" height="4" fill="#e02020"/><rect x="423" y="16" width="2" height="4" fill="#6b5a6b"/><rect x="425" y="16" width="2" height="4" fill="#35155a"/><rect x="427" y="16" width="2" height="4" fill="#6b5a6b"/><rect x="436" y="16" width="5" height="4" fill="#6b5a6b"/><rect x="446" y="16" width="1" height="4" fill="#6b5a6b"/><rect x="448" y="16" width="3" height="4" fill="#6b5a6b"/><rect x="451" y="16" width="2" height="4" fill="#e02020"/><rect x="457" y="16" width="1" height="4" fill="#6b5a6b"/><rect x="460" y="16" width="6" height="4" fill="#6b5a6b"/><rect x="466" y="16" width="1" height="4" fill="#e02020"/><rect x="475" y="16" width="7" height="4" fill="#6b5a6b"/><rect x="484" y="16" width="2" height="4" fill="#6b5a6b"/><rect x="489" y="16" width="1" height="4" fill="#e02020"/><rect x="490" y="16" width="2" height="4" fill="#6b5a6b"/><rect x="492" y="16" width="2" height="4" fill="#35155a"/><rect x="494" y="16" width="2" height="4" fill="#6b5a6b"/><rect x="499" y="16" width="2" height="4" fill="#6b5a6b"/><rect x="504" y="16" width="1" height="4" fill="#e02020"/><rect x="505" y="16" width="3" height="4" fill="#6b5a6b"/><rect x="508" y="16" width="1" height="4" fill="#35155a"/><rect x="509" y="16" width="2" height="4" fill="#6b5a6b"/><rect x="519" y="16" width="4" height="4" fill="#6b5a6b"/><rect x="525" y="16" width="1" height="4" fill="#6b5a6b"/><rect x="533" y="16" width="5" height="4" fill="#6b5a6b"/><rect x="543" y="16" width="1" height="4" fill="#6b5a6b"/><rect x="545" y="16" width="3" height="4" fill="#6b5a6b"/><rect x="548" y="16" width="2" height="4" fill="#e02020"/><rect x="557" y="16" width="6" height="4" fill="#6b5a6b"/><rect x="563" y="16" width="2" height="4" fill="#e02020"/><rect x="573" y="16" width="1" height="4" fill="#6b5a6b"/><rect x="575" y="16" width="4" height="4" fill="#6b5a6b"/><rect x="579" y="16" width="1" height="4" fill="#e02020"/><rect x="584" y="16" width="1" height="4" fill="#6b5a6b"/><rect x="587" y="16" width="7" height="4" fill="#6b5a6b"/><rect x="603" y="16" width="1" height="4" fill="#6b5a6b"/><rect x="606" y="16" width="3" height="4" fill="#6b5a6b"/><rect x="609" y="16" width="1" height="4" fill="#e02020"/><rect x="618" y="16" width="6" height="4" fill="#6b5a6b"/><rect x="632" y="16" width="6" height="4" fill="#6b5a6b"/><rect x="638" y="16" width="2" height="4" fill="#e02020"/><rect x="640" y="16" width="2" height="4" fill="#6b5a6b"/><rect x="647" y="16" width="7" height="4" fill="#6b5a6b"/><rect x="662" y="16" width="6" height="4" fill="#6b5a6b"/><rect x="668" y="16" width="2" height="4" fill="#e02020"/><rect x="677" y="16" width="7" height="4" fill="#6b5a6b"/><rect x="692" y="16" width="7" height="4" fill="#6b5a6b"/><rect x="699" y="16" width="1" height="4" fill="#e02020"/><rect x="700" y="16" width="3" height="4" fill="#6b5a6b"/><rect x="703" y="16" width="1" height="4" fill="#35155a"/><rect x="704" y="16" width="2" height="4" fill="#6b5a6b"/><rect x="714" y="16" width="1" height="4" fill="#e02020"/><rect x="715" y="16" width="2" height="4" fill="#6b5a6b"/><rect x="717" y="16" width="2" height="4" fill="#35155a"/><rect x="719" y="16" width="2" height="4" fill="#6b5a6b"/><rect x="728" y="16" width="5" height="4" fill="#6b5a6b"/><rect x="738" y="16" width="1" height="4" fill="#6b5a6b"/><rect x="741" y="16" width="3" height="4" fill="#6b5a6b"/><rect x="744" y="16" width="1" height="4" fill="#e02020"/><rect x="759" y="16" width="4" height="4" fill="#6b5a6b"/><rect x="765" y="16" width="1" height="4" fill="#6b5a6b"/><rect x="768" y="16" width="1" height="4" fill="#6b5a6b"/><rect x="771" y="16" width="6" height="4" fill="#6b5a6b"/><rect x="783" y="16" width="1" height="4" fill="#6b5a6b"/><rect x="785" y="16" width="3" height="4" fill="#6b5a6b"/><rect x="788" y="16" width="2" height="4" fill="#e02020"/><rect x="790" y="16" width="2" height="4" fill="#6b5a6b"/><rect x="793" y="16" width="2" height="4" fill="#6b5a6b"/><rect x="797" y="16" width="2" height="4" fill="#6b5a6b"/><rect x="804" y="16" width="4" height="4" fill="#6b5a6b"/><rect x="818" y="16" width="5" height="4" fill="#6b5a6b"/><rect x="825" y="16" width="1" height="4" fill="#6b5a6b"/><rect x="828" y="16" width="1" height="4" fill="#6b5a6b"/><rect x="831" y="16" width="3" height="4" fill="#6b5a6b"/><rect x="834" y="16" width="1" height="4" fill="#e02020"/><rect x="839" y="16" width="1" height="4" fill="#6b5a6b"/><rect x="842" y="16" width="7" height="4" fill="#6b5a6b"/><rect x="857" y="16" width="6" height="4" fill="#6b5a6b"/><rect x="871" y="16" width="3" height="4" fill="#6b5a6b"/><rect x="874" y="16" width="2" height="4" fill="#35155a"/><rect x="876" y="16" width="2" height="4" fill="#6b5a6b"/><rect x="883" y="16" width="3" height="4" fill="#6b5a6b"/><rect x="886" y="16" width="1" height="4" fill="#e02020"/><rect x="895" y="16" width="1" height="4" fill="#6b5a6b"/><rect x="897" y="16" width="4" height="4" fill="#6b5a6b"/><rect x="901" y="16" width="1" height="4" fill="#e02020"/><rect x="909" y="16" width="7" height="4" fill="#6b5a6b"/><rect x="923" y="16" width="1" height="4" fill="#e02020"/><rect x="924" y="16" width="7" height="4" fill="#6b5a6b"/><rect x="938" y="16" width="4" height="4" fill="#6b5a6b"/><rect x="950" y="16" width="3" height="4" fill="#6b5a6b"/><rect x="953" y="16" width="1" height="4" fill="#e02020"/><rect x="962" y="16" width="5" height="4" fill="#6b5a6b"/><rect x="967" y="16" width="1" height="4" fill="#e02020"/><rect x="968" y="16" width="1" height="4" fill="#6b5a6b"/><rect x="976" y="16" width="7" height="4" fill="#6b5a6b"/><rect x="990" y="16" width="1" height="4" fill="#e02020"/><rect x="991" y="16" width="3" height="4" fill="#6b5a6b"/><rect x="994" y="16" width="1" height="4" fill="#35155a"/><rect x="995" y="16" width="2" height="4" fill="#6b5a6b"/><rect x="1006" y="16" width="7" height="4" fill="#6b5a6b"/><rect x="1021" y="16" width="7" height="4" fill="#6b5a6b"/><rect x="1035" y="16" width="1" height="4" fill="#e02020"/><rect x="1036" y="16" width="3" height="4" fill="#6b5a6b"/><rect x="1039" y="16" width="1" height="4" fill="#35155a"/><rect x="1040" y="16" width="2" height="4" fill="#6b5a6b"/><rect x="1050" y="16" width="5" height="4" fill="#6b5a6b"/><rect x="1059" y="16" width="1" height="4" fill="#6b5a6b"/><rect x="1062" y="16" width="7" height="4" fill="#6b5a6b"/><rect x="1074" y="16" width="1" height="4" fill="#6b5a6b"/><rect x="1076" y="16" width="3" height="4" fill="#6b5a6b"/><rect x="1079" y="16" width="2" height="4" fill="#e02020"/><rect x="1088" y="16" width="6" height="4" fill="#6b5a6b"/><rect x="1094" y="16" width="1" height="4" fill="#e02020"/><rect x="1095" y="16" width="1" height="4" fill="#6b5a6b"/><rect x="1103" y="16" width="7" height="4" fill="#6b5a6b"/><rect x="1112" y="16" width="2" height="4" fill="#6b5a6b"/><rect x="1117" y="16" width="1" height="4" fill="#e02020"/><rect x="1118" y="16" width="1" height="4" fill="#6b5a6b"/><rect x="3" y="20" width="4" height="4" fill="#35155a"/><rect x="7" y="20" width="1" height="4" fill="#5f9fc0"/><rect x="8" y="20" width="3" height="4" fill="#35155a"/><rect x="18" y="20" width="4" height="4" fill="#35155a"/><rect x="24" y="20" width="1" height="4" fill="#1fa63e"/><rect x="27" y="20" width="1" height="4" fill="#35155a"/><rect x="29" y="20" width="5" height="4" fill="#35155a"/><rect x="38" y="20" width="1" height="4" fill="#1fa63e"/><rect x="41" y="20" width="7" height="4" fill="#35155a"/><rect x="56" y="20" width="7" height="4" fill="#35155a"/><rect x="71" y="20" width="7" height="4" fill="#35155a"/><rect x="85" y="20" width="4" height="4" fill="#35155a"/><rect x="89" y="20" width="1" height="4" fill="#5f9fc0"/><rect x="90" y="20" width="2" height="4" fill="#35155a"/><rect x="100" y="20" width="4" height="4" fill="#35155a"/><rect x="104" y="20" width="1" height="4" fill="#5f9fc0"/><rect x="105" y="20" width="2" height="4" fill="#35155a"/><rect x="115" y="20" width="3" height="4" fill="#35155a"/><rect x="118" y="20" width="2" height="4" fill="#5f9fc0"/><rect x="120" y="20" width="2" height="4" fill="#35155a"/><rect x="129" y="20" width="5" height="4" fill="#35155a"/><rect x="139" y="20" width="1" height="4" fill="#35155a"/><rect x="141" y="20" width="5" height="4" fill="#35155a"/><rect x="153" y="20" width="8" height="4" fill="#35155a"/><rect x="169" y="20" width="7" height="4" fill="#35155a"/><rect x="183" y="20" width="7" height="4" fill="#35155a"/><rect x="199" y="20" width="1" height="4" fill="#35155a"/><rect x="201" y="20" width="4" height="4" fill="#35155a"/><rect x="205" y="20" width="2" height="4" fill="#1fa63e"/><rect x="209" y="20" width="1" height="4" fill="#1fa63e"/><rect x="213" y="20" width="8" height="4" fill="#35155a"/><rect x="228" y="20" width="7" height="4" fill="#35155a"/><rect x="242" y="20" width="4" height="4" fill="#35155a"/><rect x="246" y="20" width="1" height="4" fill="#5f9fc0"/><rect x="247" y="20" width="2" height="4" fill="#35155a"/><rect x="257" y="20" width="4" height="4" fill="#35155a"/><rect x="263" y="20" width="1" height="4" fill="#1fa63e"/><rect x="266" y="20" width="1" height="4" fill="#35155a"/><rect x="269" y="20" width="6" height="4" fill="#35155a"/><rect x="281" y="20" width="1" height="4" fill="#35155a"/><rect x="283" y="20" width="5" height="4" fill="#35155a"/><rect x="297" y="20" width="2" height="4" fill="#1fa63e"/><rect x="302" y="20" width="8" height="4" fill="#35155a"/><rect x="312" y="20" width="2" height="4" fill="#1fa63e"/><rect x="317" y="20" width="3" height="4" fill="#35155a"/><rect x="320" y="20" width="2" height="4" fill="#5f9fc0"/><rect x="322" y="20" width="2" height="4" fill="#35155a"/><rect x="331" y="20" width="5" height="4" fill="#35155a"/><rect x="341" y="20" width="1" height="4" fill="#35155a"/><rect x="348" y="20" width="7" height="4" fill="#35155a"/><rect x="363" y="20" width="7" height="4" fill="#35155a"/><rect x="377" y="20" width="8" height="4" fill="#35155a"/><rect x="387" y="20" width="2" height="4" fill="#1fa63e"/><rect x="392" y="20" width="8" height="4" fill="#35155a"/><rect x="400" y="20" width="1" height="4" fill="#1fa63e"/><rect x="408" y="20" width="7" height="4" fill="#35155a"/><rect x="417" y="20" width="2" height="4" fill="#1fa63e"/><rect x="422" y="20" width="3" height="4" fill="#35155a"/><rect x="425" y="20" width="2" height="4" fill="#5f9fc0"/><rect x="427" y="20" width="2" height="4" fill="#35155a"/><rect x="436" y="20" width="5" height="4" fill="#35155a"/><rect x="446" y="20" width="1" height="4" fill="#35155a"/><rect x="448" y="20" width="5" height="4" fill="#35155a"/><rect x="457" y="20" width="1" height="4" fill="#1fa63e"/><rect x="460" y="20" width="7" height="4" fill="#35155a"/><rect x="475" y="20" width="7" height="4" fill="#35155a"/><rect x="484" y="20" width="2" height="4" fill="#1fa63e"/><rect x="489" y="20" width="3" height="4" fill="#35155a"/><rect x="492" y="20" width="2" height="4" fill="#5f9fc0"/><rect x="494" y="20" width="2" height="4" fill="#35155a"/><rect x="499" y="20" width="2" height="4" fill="#1fa63e"/><rect x="504" y="20" width="4" height="4" fill="#35155a"/><rect x="508" y="20" width="1" height="4" fill="#5f9fc0"/><rect x="509" y="20" width="2" height="4" fill="#35155a"/><rect x="519" y="20" width="4" height="4" fill="#35155a"/><rect x="525" y="20" width="1" height="4" fill="#1fa63e"/><rect x="533" y="20" width="5" height="4" fill="#35155a"/><rect x="543" y="20" width="1" height="4" fill="#35155a"/><rect x="545" y="20" width="5" height="4" fill="#35155a"/><rect x="557" y="20" width="8" height="4" fill="#35155a"/><rect x="573" y="20" width="1" height="4" fill="#35155a"/><rect x="575" y="20" width="5" height="4" fill="#35155a"/><rect x="584" y="20" width="1" height="4" fill="#1fa63e"/><rect x="587" y="20" width="7" height="4" fill="#35155a"/><rect x="603" y="20" width="1" height="4" fill="#35155a"/><rect x="606" y="20" width="4" height="4" fill="#35155a"/><rect x="618" y="20" width="6" height="4" fill="#35155a"/><rect x="632" y="20" width="8" height="4" fill="#35155a"/><rect x="640" y="20" width="2" height="4" fill="#1fa63e"/><rect x="647" y="20" width="7" height="4" fill="#35155a"/><rect x="662" y="20" width="8" height="4" fill="#35155a"/><rect x="677" y="20" width="7" height="4" fill="#35155a"/><rect x="692" y="20" width="11" height="4" fill="#35155a"/><rect x="703" y="20" width="1" height="4" fill="#5f9fc0"/><rect x="704" y="20" width="2" height="4" fill="#35155a"/><rect x="714" y="20" width="3" height="4" fill="#35155a"/><rect x="717" y="20" width="2" height="4" fill="#5f9fc0"/><rect x="719" y="20" width="2" height="4" fill="#35155a"/><rect x="728" y="20" width="5" height="4" fill="#35155a"/><rect x="738" y="20" width="1" height="4" fill="#35155a"/><rect x="741" y="20" width="4" height="4" fill="#35155a"/><rect x="759" y="20" width="4" height="4" fill="#35155a"/><rect x="765" y="20" width="1" height="4" fill="#1fa63e"/><rect x="768" y="20" width="1" height="4" fill="#35155a"/><rect x="771" y="20" width="6" height="4" fill="#35155a"/><rect x="783" y="20" width="1" height="4" fill="#35155a"/><rect x="785" y="20" width="5" height="4" fill="#35155a"/><rect x="790" y="20" width="2" height="4" fill="#1fa63e"/><rect x="793" y="20" width="2" height="4" fill="#1fa63e"/><rect x="797" y="20" width="2" height="4" fill="#35155a"/><rect x="804" y="20" width="4" height="4" fill="#35155a"/><rect x="818" y="20" width="5" height="4" fill="#35155a"/><rect x="825" y="20" width="1" height="4" fill="#1fa63e"/><rect x="828" y="20" width="1" height="4" fill="#35155a"/><rect x="831" y="20" width="4" height="4" fill="#35155a"/><rect x="839" y="20" width="1" height="4" fill="#1fa63e"/><rect x="842" y="20" width="7" height="4" fill="#35155a"/><rect x="857" y="20" width="6" height="4" fill="#35155a"/><rect x="871" y="20" width="3" height="4" fill="#35155a"/><rect x="874" y="20" width="2" height="4" fill="#5f9fc0"/><rect x="876" y="20" width="2" height="4" fill="#35155a"/><rect x="883" y="20" width="4" height="4" fill="#35155a"/><rect x="895" y="20" width="1" height="4" fill="#35155a"/><rect x="897" y="20" width="5" height="4" fill="#35155a"/><rect x="909" y="20" width="7" height="4" fill="#35155a"/><rect x="923" y="20" width="8" height="4" fill="#35155a"/><rect x="938" y="20" width="4" height="4" fill="#35155a"/><rect x="950" y="20" width="4" height="4" fill="#35155a"/><rect x="962" y="20" width="6" height="4" fill="#35155a"/><rect x="968" y="20" width="1" height="4" fill="#1fa63e"/><rect x="976" y="20" width="7" height="4" fill="#35155a"/><rect x="990" y="20" width="4" height="4" fill="#35155a"/><rect x="994" y="20" width="1" height="4" fill="#5f9fc0"/><rect x="995" y="20" width="2" height="4" fill="#35155a"/><rect x="1006" y="20" width="7" height="4" fill="#35155a"/><rect x="1021" y="20" width="6" height="4" fill="#35155a"/><rect x="1027" y="20" width="1" height="4" fill="#1fa63e"/><rect x="1035" y="20" width="4" height="4" fill="#35155a"/><rect x="1039" y="20" width="1" height="4" fill="#5f9fc0"/><rect x="1040" y="20" width="2" height="4" fill="#35155a"/><rect x="1050" y="20" width="3" height="4" fill="#35155a"/><rect x="1053" y="20" width="2" height="4" fill="#1fa63e"/><rect x="1059" y="20" width="1" height="4" fill="#35155a"/><rect x="1062" y="20" width="7" height="4" fill="#35155a"/><rect x="1074" y="20" width="1" height="4" fill="#35155a"/><rect x="1076" y="20" width="5" height="4" fill="#35155a"/><rect x="1088" y="20" width="7" height="4" fill="#35155a"/><rect x="1095" y="20" width="1" height="4" fill="#1fa63e"/><rect x="1103" y="20" width="6" height="4" fill="#35155a"/><rect x="1109" y="20" width="1" height="4" fill="#1fa63e"/><rect x="1112" y="20" width="2" height="4" fill="#1fa63e"/><rect x="1117" y="20" width="2" height="4" fill="#35155a"/><rect x="3" y="24" width="4" height="4" fill="#5f9fc0"/><rect x="7" y="24" width="1" height="4" fill="#9aa648"/><rect x="8" y="24" width="3" height="4" fill="#5f9fc0"/><rect x="18" y="24" width="4" height="4" fill="#5f9fc0"/><rect x="24" y="24" width="1" height="4" fill="#c060b0"/><rect x="27" y="24" width="1" height="4" fill="#5f9fc0"/><rect x="29" y="24" width="5" height="4" fill="#5f9fc0"/><rect x="38" y="24" width="1" height="4" fill="#c060b0"/><rect x="41" y="24" width="7" height="4" fill="#5f9fc0"/><rect x="56" y="24" width="7" height="4" fill="#5f9fc0"/><rect x="71" y="24" width="7" height="4" fill="#5f9fc0"/><rect x="85" y="24" width="4" height="4" fill="#5f9fc0"/><rect x="89" y="24" width="1" height="4" fill="#9aa648"/><rect x="90" y="24" width="2" height="4" fill="#5f9fc0"/><rect x="100" y="24" width="4" height="4" fill="#5f9fc0"/><rect x="104" y="24" width="1" height="4" fill="#9aa648"/><rect x="105" y="24" width="2" height="4" fill="#5f9fc0"/><rect x="115" y="24" width="3" height="4" fill="#5f9fc0"/><rect x="118" y="24" width="2" height="4" fill="#9aa648"/><rect x="120" y="24" width="2" height="4" fill="#5f9fc0"/><rect x="129" y="24" width="5" height="4" fill="#5f9fc0"/><rect x="139" y="24" width="1" height="4" fill="#5f9fc0"/><rect x="141" y="24" width="5" height="4" fill="#5f9fc0"/><rect x="153" y="24" width="8" height="4" fill="#5f9fc0"/><rect x="169" y="24" width="7" height="4" fill="#5f9fc0"/><rect x="183" y="24" width="7" height="4" fill="#5f9fc0"/><rect x="199" y="24" width="1" height="4" fill="#5f9fc0"/><rect x="201" y="24" width="4" height="4" fill="#5f9fc0"/><rect x="205" y="24" width="2" height="4" fill="#c060b0"/><rect x="209" y="24" width="1" height="4" fill="#c060b0"/><rect x="213" y="24" width="8" height="4" fill="#5f9fc0"/><rect x="228" y="24" width="7" height="4" fill="#5f9fc0"/><rect x="242" y="24" width="4" height="4" fill="#5f9fc0"/><rect x="246" y="24" width="1" height="4" fill="#9aa648"/><rect x="247" y="24" width="2" height="4" fill="#5f9fc0"/><rect x="257" y="24" width="4" height="4" fill="#5f9fc0"/><rect x="263" y="24" width="1" height="4" fill="#c060b0"/><rect x="266" y="24" width="1" height="4" fill="#5f9fc0"/><rect x="269" y="24" width="6" height="4" fill="#5f9fc0"/><rect x="281" y="24" width="1" height="4" fill="#5f9fc0"/><rect x="283" y="24" width="5" height="4" fill="#5f9fc0"/><rect x="297" y="24" width="2" height="4" fill="#c060b0"/><rect x="302" y="24" width="8" height="4" fill="#5f9fc0"/><rect x="312" y="24" width="2" height="4" fill="#c060b0"/><rect x="317" y="24" width="3" height="4" fill="#5f9fc0"/><rect x="320" y="24" width="2" height="4" fill="#9aa648"/><rect x="322" y="24" width="2" height="4" fill="#5f9fc0"/><rect x="331" y="24" width="5" height="4" fill="#5f9fc0"/><rect x="341" y="24" width="1" height="4" fill="#5f9fc0"/><rect x="348" y="24" width="7" height="4" fill="#5f9fc0"/><rect x="363" y="24" width="7" height="4" fill="#5f9fc0"/><rect x="377" y="24" width="8" height="4" fill="#5f9fc0"/><rect x="387" y="24" width="2" height="4" fill="#c060b0"/><rect x="392" y="24" width="8" height="4" fill="#5f9fc0"/><rect x="400" y="24" width="1" height="4" fill="#c060b0"/><rect x="408" y="24" width="7" height="4" fill="#5f9fc0"/><rect x="417" y="24" width="2" height="4" fill="#c060b0"/><rect x="422" y="24" width="3" height="4" fill="#5f9fc0"/><rect x="425" y="24" width="2" height="4" fill="#9aa648"/><rect x="427" y="24" width="2" height="4" fill="#5f9fc0"/><rect x="436" y="24" width="5" height="4" fill="#5f9fc0"/><rect x="446" y="24" width="1" height="4" fill="#5f9fc0"/><rect x="448" y="24" width="5" height="4" fill="#5f9fc0"/><rect x="457" y="24" width="1" height="4" fill="#c060b0"/><rect x="460" y="24" width="7" height="4" fill="#5f9fc0"/><rect x="475" y="24" width="7" height="4" fill="#5f9fc0"/><rect x="484" y="24" width="2" height="4" fill="#c060b0"/><rect x="489" y="24" width="3" height="4" fill="#5f9fc0"/><rect x="492" y="24" width="2" height="4" fill="#9aa648"/><rect x="494" y="24" width="2" height="4" fill="#5f9fc0"/><rect x="499" y="24" width="2" height="4" fill="#c060b0"/><rect x="504" y="24" width="4" height="4" fill="#5f9fc0"/><rect x="508" y="24" width="1" height="4" fill="#9aa648"/><rect x="509" y="24" width="2" height="4" fill="#5f9fc0"/><rect x="519" y="24" width="4" height="4" fill="#5f9fc0"/><rect x="525" y="24" width="1" height="4" fill="#c060b0"/><rect x="533" y="24" width="5" height="4" fill="#5f9fc0"/><rect x="543" y="24" width="1" height="4" fill="#5f9fc0"/><rect x="545" y="24" width="5" height="4" fill="#5f9fc0"/><rect x="557" y="24" width="8" height="4" fill="#5f9fc0"/><rect x="573" y="24" width="1" height="4" fill="#5f9fc0"/><rect x="575" y="24" width="5" height="4" fill="#5f9fc0"/><rect x="584" y="24" width="1" height="4" fill="#c060b0"/><rect x="587" y="24" width="7" height="4" fill="#5f9fc0"/><rect x="603" y="24" width="1" height="4" fill="#5f9fc0"/><rect x="606" y="24" width="4" height="4" fill="#5f9fc0"/><rect x="618" y="24" width="6" height="4" fill="#5f9fc0"/><rect x="632" y="24" width="8" height="4" fill="#5f9fc0"/><rect x="640" y="24" width="2" height="4" fill="#c060b0"/><rect x="647" y="24" width="7" height="4" fill="#5f9fc0"/><rect x="662" y="24" width="8" height="4" fill="#5f9fc0"/><rect x="677" y="24" width="7" height="4" fill="#5f9fc0"/><rect x="692" y="24" width="11" height="4" fill="#5f9fc0"/><rect x="703" y="24" width="1" height="4" fill="#9aa648"/><rect x="704" y="24" width="2" height="4" fill="#5f9fc0"/><rect x="714" y="24" width="3" height="4" fill="#5f9fc0"/><rect x="717" y="24" width="2" height="4" fill="#9aa648"/><rect x="719" y="24" width="2" height="4" fill="#5f9fc0"/><rect x="728" y="24" width="5" height="4" fill="#5f9fc0"/><rect x="738" y="24" width="1" height="4" fill="#5f9fc0"/><rect x="741" y="24" width="4" height="4" fill="#5f9fc0"/><rect x="759" y="24" width="4" height="4" fill="#5f9fc0"/><rect x="765" y="24" width="1" height="4" fill="#c060b0"/><rect x="768" y="24" width="1" height="4" fill="#5f9fc0"/><rect x="771" y="24" width="6" height="4" fill="#5f9fc0"/><rect x="783" y="24" width="1" height="4" fill="#5f9fc0"/><rect x="785" y="24" width="5" height="4" fill="#5f9fc0"/><rect x="790" y="24" width="2" height="4" fill="#c060b0"/><rect x="793" y="24" width="2" height="4" fill="#c060b0"/><rect x="797" y="24" width="2" height="4" fill="#5f9fc0"/><rect x="804" y="24" width="4" height="4" fill="#5f9fc0"/><rect x="818" y="24" width="5" height="4" fill="#5f9fc0"/><rect x="825" y="24" width="1" height="4" fill="#c060b0"/><rect x="828" y="24" width="1" height="4" fill="#5f9fc0"/><rect x="831" y="24" width="4" height="4" fill="#5f9fc0"/><rect x="839" y="24" width="1" height="4" fill="#c060b0"/><rect x="842" y="24" width="7" height="4" fill="#5f9fc0"/><rect x="857" y="24" width="6" height="4" fill="#5f9fc0"/><rect x="871" y="24" width="3" height="4" fill="#5f9fc0"/><rect x="874" y="24" width="2" height="4" fill="#9aa648"/><rect x="876" y="24" width="2" height="4" fill="#5f9fc0"/><rect x="883" y="24" width="4" height="4" fill="#5f9fc0"/><rect x="895" y="24" width="1" height="4" fill="#5f9fc0"/><rect x="897" y="24" width="5" height="4" fill="#5f9fc0"/><rect x="909" y="24" width="7" height="4" fill="#5f9fc0"/><rect x="923" y="24" width="8" height="4" fill="#5f9fc0"/><rect x="938" y="24" width="4" height="4" fill="#5f9fc0"/><rect x="950" y="24" width="4" height="4" fill="#5f9fc0"/><rect x="962" y="24" width="6" height="4" fill="#5f9fc0"/><rect x="968" y="24" width="1" height="4" fill="#c060b0"/><rect x="976" y="24" width="7" height="4" fill="#5f9fc0"/><rect x="990" y="24" width="4" height="4" fill="#5f9fc0"/><rect x="994" y="24" width="1" height="4" fill="#9aa648"/><rect x="995" y="24" width="2" height="4" fill="#5f9fc0"/><rect x="1006" y="24" width="7" height="4" fill="#5f9fc0"/><rect x="1021" y="24" width="6" height="4" fill="#5f9fc0"/><rect x="1027" y="24" width="1" height="4" fill="#c060b0"/><rect x="1035" y="24" width="4" height="4" fill="#5f9fc0"/><rect x="1039" y="24" width="1" height="4" fill="#9aa648"/><rect x="1040" y="24" width="2" height="4" fill="#5f9fc0"/><rect x="1050" y="24" width="3" height="4" fill="#5f9fc0"/><rect x="1053" y="24" width="2" height="4" fill="#c060b0"/><rect x="1059" y="24" width="1" height="4" fill="#5f9fc0"/><rect x="1062" y="24" width="7" height="4" fill="#5f9fc0"/><rect x="1074" y="24" width="1" height="4" fill="#5f9fc0"/><rect x="1076" y="24" width="5" height="4" fill="#5f9fc0"/><rect x="1088" y="24" width="7" height="4" fill="#5f9fc0"/><rect x="1095" y="24" width="1" height="4" fill="#c060b0"/><rect x="1103" y="24" width="6" height="4" fill="#5f9fc0"/><rect x="1109" y="24" width="1" height="4" fill="#c060b0"/><rect x="1112" y="24" width="2" height="4" fill="#c060b0"/><rect x="1117" y="24" width="2" height="4" fill="#5f9fc0"/><rect x="3" y="28" width="4" height="5" fill="#9aa648"/><rect x="7" y="28" width="1" height="5" fill="#222420"/><rect x="8" y="28" width="3" height="5" fill="#9aa648"/><rect x="18" y="28" width="4" height="5" fill="#9aa648"/><rect x="24" y="28" width="1" height="5" fill="#1fa63e"/><rect x="27" y="28" width="1" height="5" fill="#9aa648"/><rect x="29" y="28" width="5" height="5" fill="#9aa648"/><rect x="38" y="28" width="1" height="5" fill="#1fa63e"/><rect x="41" y="28" width="7" height="5" fill="#9aa648"/><rect x="56" y="28" width="7" height="5" fill="#9aa648"/><rect x="71" y="28" width="7" height="5" fill="#9aa648"/><rect x="85" y="28" width="4" height="5" fill="#9aa648"/><rect x="89" y="28" width="1" height="5" fill="#222420"/><rect x="90" y="28" width="2" height="5" fill="#9aa648"/><rect x="100" y="28" width="4" height="5" fill="#9aa648"/><rect x="104" y="28" width="1" height="5" fill="#222420"/><rect x="105" y="28" width="2" height="5" fill="#9aa648"/><rect x="115" y="28" width="3" height="5" fill="#9aa648"/><rect x="118" y="28" width="2" height="5" fill="#222420"/><rect x="120" y="28" width="2" height="5" fill="#9aa648"/><rect x="129" y="28" width="5" height="5" fill="#9aa648"/><rect x="139" y="28" width="1" height="5" fill="#9aa648"/><rect x="141" y="28" width="5" height="5" fill="#9aa648"/><rect x="153" y="28" width="8" height="5" fill="#9aa648"/><rect x="169" y="28" width="7" height="5" fill="#9aa648"/><rect x="183" y="28" width="7" height="5" fill="#9aa648"/><rect x="199" y="28" width="1" height="5" fill="#9aa648"/><rect x="201" y="28" width="4" height="5" fill="#9aa648"/><rect x="205" y="28" width="2" height="5" fill="#1fa63e"/><rect x="209" y="28" width="1" height="5" fill="#1fa63e"/><rect x="213" y="28" width="8" height="5" fill="#9aa648"/><rect x="228" y="28" width="7" height="5" fill="#9aa648"/><rect x="242" y="28" width="4" height="5" fill="#9aa648"/><rect x="246" y="28" width="1" height="5" fill="#222420"/><rect x="247" y="28" width="2" height="5" fill="#9aa648"/><rect x="257" y="28" width="4" height="5" fill="#9aa648"/><rect x="263" y="28" width="1" height="5" fill="#1fa63e"/><rect x="266" y="28" width="1" height="5" fill="#9aa648"/><rect x="269" y="28" width="6" height="5" fill="#9aa648"/><rect x="281" y="28" width="1" height="5" fill="#9aa648"/><rect x="283" y="28" width="5" height="5" fill="#9aa648"/><rect x="297" y="28" width="2" height="5" fill="#1fa63e"/><rect x="302" y="28" width="8" height="5" fill="#9aa648"/><rect x="312" y="28" width="2" height="5" fill="#1fa63e"/><rect x="317" y="28" width="3" height="5" fill="#9aa648"/><rect x="320" y="28" width="2" height="5" fill="#222420"/><rect x="322" y="28" width="2" height="5" fill="#9aa648"/><rect x="331" y="28" width="5" height="5" fill="#9aa648"/><rect x="341" y="28" width="1" height="5" fill="#9aa648"/><rect x="348" y="28" width="7" height="5" fill="#9aa648"/><rect x="363" y="28" width="7" height="5" fill="#9aa648"/><rect x="377" y="28" width="8" height="5" fill="#9aa648"/><rect x="387" y="28" width="2" height="5" fill="#1fa63e"/><rect x="392" y="28" width="8" height="5" fill="#9aa648"/><rect x="400" y="28" width="1" height="5" fill="#1fa63e"/><rect x="408" y="28" width="7" height="5" fill="#9aa648"/><rect x="417" y="28" width="2" height="5" fill="#1fa63e"/><rect x="422" y="28" width="3" height="5" fill="#9aa648"/><rect x="425" y="28" width="2" height="5" fill="#222420"/><rect x="427" y="28" width="2" height="5" fill="#9aa648"/><rect x="436" y="28" width="5" height="5" fill="#9aa648"/><rect x="446" y="28" width="1" height="5" fill="#9aa648"/><rect x="448" y="28" width="5" height="5" fill="#9aa648"/><rect x="457" y="28" width="1" height="5" fill="#1fa63e"/><rect x="460" y="28" width="7" height="5" fill="#9aa648"/><rect x="475" y="28" width="7" height="5" fill="#9aa648"/><rect x="484" y="28" width="2" height="5" fill="#1fa63e"/><rect x="489" y="28" width="3" height="5" fill="#9aa648"/><rect x="492" y="28" width="2" height="5" fill="#222420"/><rect x="494" y="28" width="2" height="5" fill="#9aa648"/><rect x="499" y="28" width="2" height="5" fill="#1fa63e"/><rect x="504" y="28" width="4" height="5" fill="#9aa648"/><rect x="508" y="28" width="1" height="5" fill="#222420"/><rect x="509" y="28" width="2" height="5" fill="#9aa648"/><rect x="519" y="28" width="4" height="5" fill="#9aa648"/><rect x="525" y="28" width="1" height="5" fill="#1fa63e"/><rect x="533" y="28" width="5" height="5" fill="#9aa648"/><rect x="543" y="28" width="1" height="5" fill="#9aa648"/><rect x="545" y="28" width="5" height="5" fill="#9aa648"/><rect x="557" y="28" width="8" height="5" fill="#9aa648"/><rect x="573" y="28" width="1" height="5" fill="#9aa648"/><rect x="575" y="28" width="5" height="5" fill="#9aa648"/><rect x="584" y="28" width="1" height="5" fill="#1fa63e"/><rect x="587" y="28" width="7" height="5" fill="#9aa648"/><rect x="603" y="28" width="1" height="5" fill="#9aa648"/><rect x="606" y="28" width="4" height="5" fill="#9aa648"/><rect x="618" y="28" width="6" height="5" fill="#9aa648"/><rect x="632" y="28" width="8" height="5" fill="#9aa648"/><rect x="640" y="28" width="2" height="5" fill="#1fa63e"/><rect x="647" y="28" width="7" height="5" fill="#9aa648"/><rect x="662" y="28" width="8" height="5" fill="#9aa648"/><rect x="677" y="28" width="7" height="5" fill="#9aa648"/><rect x="692" y="28" width="11" height="5" fill="#9aa648"/><rect x="703" y="28" width="1" height="5" fill="#222420"/><rect x="704" y="28" width="2" height="5" fill="#9aa648"/><rect x="714" y="28" width="3" height="5" fill="#9aa648"/><rect x="717" y="28" width="2" height="5" fill="#222420"/><rect x="719" y="28" width="2" height="5" fill="#9aa648"/><rect x="728" y="28" width="5" height="5" fill="#9aa648"/><rect x="738" y="28" width="1" height="5" fill="#9aa648"/><rect x="741" y="28" width="4" height="5" fill="#9aa648"/><rect x="759" y="28" width="4" height="5" fill="#9aa648"/><rect x="765" y="28" width="1" height="5" fill="#1fa63e"/><rect x="768" y="28" width="1" height="5" fill="#9aa648"/><rect x="771" y="28" width="6" height="5" fill="#9aa648"/><rect x="783" y="28" width="1" height="5" fill="#9aa648"/><rect x="785" y="28" width="5" height="5" fill="#9aa648"/><rect x="790" y="28" width="2" height="5" fill="#1fa63e"/><rect x="793" y="28" width="2" height="5" fill="#1fa63e"/><rect x="797" y="28" width="2" height="5" fill="#9aa648"/><rect x="804" y="28" width="4" height="5" fill="#9aa648"/><rect x="818" y="28" width="5" height="5" fill="#9aa648"/><rect x="825" y="28" width="1" height="5" fill="#1fa63e"/><rect x="828" y="28" width="1" height="5" fill="#9aa648"/><rect x="831" y="28" width="4" height="5" fill="#9aa648"/><rect x="839" y="28" width="1" height="5" fill="#1fa63e"/><rect x="842" y="28" width="7" height="5" fill="#9aa648"/><rect x="857" y="28" width="6" height="5" fill="#9aa648"/><rect x="871" y="28" width="3" height="5" fill="#9aa648"/><rect x="874" y="28" width="2" height="5" fill="#222420"/><rect x="876" y="28" width="2" height="5" fill="#9aa648"/><rect x="883" y="28" width="4" height="5" fill="#9aa648"/><rect x="895" y="28" width="1" height="5" fill="#9aa648"/><rect x="897" y="28" width="5" height="5" fill="#9aa648"/><rect x="909" y="28" width="7" height="5" fill="#9aa648"/><rect x="923" y="28" width="8" height="5" fill="#9aa648"/><rect x="938" y="28" width="4" height="5" fill="#9aa648"/><rect x="950" y="28" width="4" height="5" fill="#9aa648"/><rect x="962" y="28" width="6" height="5" fill="#9aa648"/><rect x="968" y="28" width="1" height="5" fill="#1fa63e"/><rect x="976" y="28" width="7" height="5" fill="#9aa648"/><rect x="990" y="28" width="4" height="5" fill="#9aa648"/><rect x="994" y="28" width="1" height="5" fill="#222420"/><rect x="995" y="28" width="2" height="5" fill="#9aa648"/><rect x="1006" y="28" width="7" height="5" fill="#9aa648"/><rect x="1021" y="28" width="6" height="5" fill="#9aa648"/><rect x="1027" y="28" width="1" height="5" fill="#1fa63e"/><rect x="1035" y="28" width="4" height="5" fill="#9aa648"/><rect x="1039" y="28" width="1" height="5" fill="#222420"/><rect x="1040" y="28" width="2" height="5" fill="#9aa648"/><rect x="1050" y="28" width="3" height="5" fill="#9aa648"/><rect x="1053" y="28" width="2" height="5" fill="#1fa63e"/><rect x="1059" y="28" width="1" height="5" fill="#9aa648"/><rect x="1062" y="28" width="7" height="5" fill="#9aa648"/><rect x="1074" y="28" width="1" height="5" fill="#9aa648"/><rect x="1076" y="28" width="5" height="5" fill="#9aa648"/><rect x="1088" y="28" width="7" height="5" fill="#9aa648"/><rect x="1095" y="28" width="1" height="5" fill="#1fa63e"/><rect x="1103" y="28" width="6" height="5" fill="#9aa648"/><rect x="1109" y="28" width="1" height="5" fill="#1fa63e"/><rect x="1112" y="28" width="2" height="5" fill="#1fa63e"/><rect x="1117" y="28" width="2" height="5" fill="#9aa648"/><rect x="3" y="33" width="4" height="4" fill="#222420"/><rect x="7" y="33" width="1" height="4" fill="#2a14d0"/><rect x="8" y="33" width="3" height="4" fill="#222420"/><rect x="18" y="33" width="4" height="4" fill="#222420"/><rect x="24" y="33" width="1" height="4" fill="#22b8dc"/><rect x="27" y="33" width="1" height="4" fill="#222420"/><rect x="29" y="33" width="5" height="4" fill="#222420"/><rect x="38" y="33" width="1" height="4" fill="#22b8dc"/><rect x="41" y="33" width="7" height="4" fill="#222420"/><rect x="56" y="33" width="7" height="4" fill="#222420"/><rect x="71" y="33" width="7" height="4" fill="#222420"/><rect x="85" y="33" width="4" height="4" fill="#222420"/><rect x="89" y="33" width="1" height="4" fill="#2a14d0"/><rect x="90" y="33" width="2" height="4" fill="#222420"/><rect x="100" y="33" width="4" height="4" fill="#222420"/><rect x="104" y="33" width="1" height="4" fill="#2a14d0"/><rect x="105" y="33" width="2" height="4" fill="#222420"/><rect x="115" y="33" width="3" height="4" fill="#222420"/><rect x="118" y="33" width="2" height="4" fill="#2a14d0"/><rect x="120" y="33" width="2" height="4" fill="#222420"/><rect x="129" y="33" width="5" height="4" fill="#222420"/><rect x="139" y="33" width="1" height="4" fill="#222420"/><rect x="141" y="33" width="5" height="4" fill="#222420"/><rect x="153" y="33" width="8" height="4" fill="#222420"/><rect x="169" y="33" width="7" height="4" fill="#222420"/><rect x="183" y="33" width="7" height="4" fill="#222420"/><rect x="199" y="33" width="1" height="4" fill="#222420"/><rect x="201" y="33" width="4" height="4" fill="#222420"/><rect x="205" y="33" width="2" height="4" fill="#22b8dc"/><rect x="209" y="33" width="1" height="4" fill="#22b8dc"/><rect x="213" y="33" width="8" height="4" fill="#222420"/><rect x="228" y="33" width="7" height="4" fill="#222420"/><rect x="242" y="33" width="4" height="4" fill="#222420"/><rect x="246" y="33" width="1" height="4" fill="#2a14d0"/><rect x="247" y="33" width="2" height="4" fill="#222420"/><rect x="257" y="33" width="4" height="4" fill="#222420"/><rect x="263" y="33" width="1" height="4" fill="#22b8dc"/><rect x="266" y="33" width="1" height="4" fill="#222420"/><rect x="269" y="33" width="6" height="4" fill="#222420"/><rect x="281" y="33" width="1" height="4" fill="#222420"/><rect x="283" y="33" width="5" height="4" fill="#222420"/><rect x="297" y="33" width="2" height="4" fill="#22b8dc"/><rect x="302" y="33" width="8" height="4" fill="#222420"/><rect x="312" y="33" width="2" height="4" fill="#22b8dc"/><rect x="317" y="33" width="3" height="4" fill="#222420"/><rect x="320" y="33" width="2" height="4" fill="#2a14d0"/><rect x="322" y="33" width="2" height="4" fill="#222420"/><rect x="331" y="33" width="5" height="4" fill="#222420"/><rect x="341" y="33" width="1" height="4" fill="#222420"/><rect x="348" y="33" width="7" height="4" fill="#222420"/><rect x="363" y="33" width="7" height="4" fill="#222420"/><rect x="377" y="33" width="8" height="4" fill="#222420"/><rect x="387" y="33" width="2" height="4" fill="#22b8dc"/><rect x="392" y="33" width="8" height="4" fill="#222420"/><rect x="400" y="33" width="1" height="4" fill="#22b8dc"/><rect x="408" y="33" width="7" height="4" fill="#222420"/><rect x="417" y="33" width="2" height="4" fill="#22b8dc"/><rect x="422" y="33" width="3" height="4" fill="#222420"/><rect x="425" y="33" width="2" height="4" fill="#2a14d0"/><rect x="427" y="33" width="2" height="4" fill="#222420"/><rect x="436" y="33" width="5" height="4" fill="#222420"/><rect x="446" y="33" width="1" height="4" fill="#222420"/><rect x="448" y="33" width="5" height="4" fill="#222420"/><rect x="457" y="33" width="1" height="4" fill="#22b8dc"/><rect x="460" y="33" width="7" height="4" fill="#222420"/><rect x="475" y="33" width="7" height="4" fill="#222420"/><rect x="484" y="33" width="2" height="4" fill="#22b8dc"/><rect x="489" y="33" width="3" height="4" fill="#222420"/><rect x="492" y="33" width="2" height="4" fill="#2a14d0"/><rect x="494" y="33" width="2" height="4" fill="#222420"/><rect x="499" y="33" width="2" height="4" fill="#22b8dc"/><rect x="504" y="33" width="4" height="4" fill="#222420"/><rect x="508" y="33" width="1" height="4" fill="#2a14d0"/><rect x="509" y="33" width="2" height="4" fill="#222420"/><rect x="519" y="33" width="4" height="4" fill="#222420"/><rect x="525" y="33" width="1" height="4" fill="#22b8dc"/><rect x="533" y="33" width="5" height="4" fill="#222420"/><rect x="543" y="33" width="1" height="4" fill="#222420"/><rect x="545" y="33" width="5" height="4" fill="#222420"/><rect x="557" y="33" width="8" height="4" fill="#222420"/><rect x="573" y="33" width="1" height="4" fill="#222420"/><rect x="575" y="33" width="5" height="4" fill="#222420"/><rect x="584" y="33" width="1" height="4" fill="#22b8dc"/><rect x="587" y="33" width="7" height="4" fill="#222420"/><rect x="603" y="33" width="1" height="4" fill="#222420"/><rect x="606" y="33" width="4" height="4" fill="#222420"/><rect x="618" y="33" width="6" height="4" fill="#222420"/><rect x="632" y="33" width="8" height="4" fill="#222420"/><rect x="640" y="33" width="2" height="4" fill="#22b8dc"/><rect x="647" y="33" width="7" height="4" fill="#222420"/><rect x="662" y="33" width="8" height="4" fill="#222420"/><rect x="677" y="33" width="7" height="4" fill="#222420"/><rect x="692" y="33" width="11" height="4" fill="#222420"/><rect x="703" y="33" width="1" height="4" fill="#2a14d0"/><rect x="704" y="33" width="2" height="4" fill="#222420"/><rect x="714" y="33" width="3" height="4" fill="#222420"/><rect x="717" y="33" width="2" height="4" fill="#2a14d0"/><rect x="719" y="33" width="2" height="4" fill="#222420"/><rect x="728" y="33" width="5" height="4" fill="#222420"/><rect x="738" y="33" width="1" height="4" fill="#222420"/><rect x="741" y="33" width="4" height="4" fill="#222420"/><rect x="759" y="33" width="4" height="4" fill="#222420"/><rect x="765" y="33" width="1" height="4" fill="#22b8dc"/><rect x="768" y="33" width="1" height="4" fill="#222420"/><rect x="771" y="33" width="6" height="4" fill="#222420"/><rect x="783" y="33" width="1" height="4" fill="#222420"/><rect x="785" y="33" width="5" height="4" fill="#222420"/><rect x="790" y="33" width="2" height="4" fill="#22b8dc"/><rect x="793" y="33" width="2" height="4" fill="#22b8dc"/><rect x="797" y="33" width="2" height="4" fill="#222420"/><rect x="804" y="33" width="4" height="4" fill="#222420"/><rect x="818" y="33" width="5" height="4" fill="#222420"/><rect x="825" y="33" width="1" height="4" fill="#22b8dc"/><rect x="828" y="33" width="1" height="4" fill="#222420"/><rect x="831" y="33" width="4" height="4" fill="#222420"/><rect x="839" y="33" width="1" height="4" fill="#22b8dc"/><rect x="842" y="33" width="7" height="4" fill="#222420"/><rect x="857" y="33" width="6" height="4" fill="#222420"/><rect x="871" y="33" width="3" height="4" fill="#222420"/><rect x="874" y="33" width="2" height="4" fill="#2a14d0"/><rect x="876" y="33" width="2" height="4" fill="#222420"/><rect x="883" y="33" width="4" height="4" fill="#222420"/><rect x="895" y="33" width="1" height="4" fill="#222420"/><rect x="897" y="33" width="5" height="4" fill="#222420"/><rect x="909" y="33" width="7" height="4" fill="#222420"/><rect x="923" y="33" width="8" height="4" fill="#222420"/><rect x="938" y="33" width="4" height="4" fill="#222420"/><rect x="950" y="33" width="4" height="4" fill="#222420"/><rect x="962" y="33" width="6" height="4" fill="#222420"/><rect x="968" y="33" width="1" height="4" fill="#22b8dc"/><rect x="976" y="33" width="7" height="4" fill="#222420"/><rect x="990" y="33" width="4" height="4" fill="#222420"/><rect x="994" y="33" width="1" height="4" fill="#2a14d0"/><rect x="995" y="33" width="2" height="4" fill="#222420"/><rect x="1006" y="33" width="7" height="4" fill="#222420"/><rect x="1021" y="33" width="6" height="4" fill="#222420"/><rect x="1027" y="33" width="1" height="4" fill="#22b8dc"/><rect x="1035" y="33" width="4" height="4" fill="#222420"/><rect x="1039" y="33" width="1" height="4" fill="#2a14d0"/><rect x="1040" y="33" width="2" height="4" fill="#222420"/><rect x="1050" y="33" width="3" height="4" fill="#222420"/><rect x="1053" y="33" width="2" height="4" fill="#22b8dc"/><rect x="1059" y="33" width="1" height="4" fill="#222420"/><rect x="1062" y="33" width="7" height="4" fill="#222420"/><rect x="1074" y="33" width="1" height="4" fill="#222420"/><rect x="1076" y="33" width="5" height="4" fill="#222420"/><rect x="1088" y="33" width="7" height="4" fill="#222420"/><rect x="1095" y="33" width="1" height="4" fill="#22b8dc"/><rect x="1103" y="33" width="6" height="4" fill="#222420"/><rect x="1109" y="33" width="1" height="4" fill="#22b8dc"/><rect x="1112" y="33" width="2" height="4" fill="#22b8dc"/><rect x="1117" y="33" width="2" height="4" fill="#222420"/><rect x="3" y="37" width="1" height="4" fill="#7d8c41"/><rect x="4" y="37" width="3" height="4" fill="#c3c6ad"/><rect x="8" y="37" width="3" height="4" fill="#c3c6ad"/><rect x="18" y="37" width="4" height="4" fill="#c3c6ad"/><rect x="27" y="37" width="1" height="4" fill="#c3c6ad"/><rect x="29" y="37" width="4" height="4" fill="#c3c6ad"/><rect x="33" y="37" width="1" height="4" fill="#7d8c41"/><rect x="41" y="37" width="7" height="4" fill="#c3c6ad"/><rect x="56" y="37" width="7" height="4" fill="#c3c6ad"/><rect x="71" y="37" width="7" height="4" fill="#c3c6ad"/><rect x="85" y="37" width="1" height="4" fill="#7d8c41"/><rect x="86" y="37" width="3" height="4" fill="#c3c6ad"/><rect x="90" y="37" width="2" height="4" fill="#c3c6ad"/><rect x="100" y="37" width="1" height="4" fill="#7d8c41"/><rect x="101" y="37" width="3" height="4" fill="#c3c6ad"/><rect x="105" y="37" width="2" height="4" fill="#c3c6ad"/><rect x="115" y="37" width="3" height="4" fill="#c3c6ad"/><rect x="120" y="37" width="2" height="4" fill="#c3c6ad"/><rect x="129" y="37" width="5" height="4" fill="#c3c6ad"/><rect x="139" y="37" width="1" height="4" fill="#c3c6ad"/><rect x="141" y="37" width="4" height="4" fill="#c3c6ad"/><rect x="145" y="37" width="1" height="4" fill="#7d8c41"/><rect x="153" y="37" width="6" height="4" fill="#c3c6ad"/><rect x="159" y="37" width="2" height="4" fill="#7d8c41"/><rect x="169" y="37" width="5" height="4" fill="#c3c6ad"/><rect x="174" y="37" width="2" height="4" fill="#7d8c41"/><rect x="183" y="37" width="7" height="4" fill="#c3c6ad"/><rect x="199" y="37" width="1" height="4" fill="#c3c6ad"/><rect x="201" y="37" width="4" height="4" fill="#c3c6ad"/><rect x="213" y="37" width="6" height="4" fill="#c3c6ad"/><rect x="219" y="37" width="2" height="4" fill="#7d8c41"/><rect x="228" y="37" width="7" height="4" fill="#c3c6ad"/><rect x="242" y="37" width="1" height="4" fill="#7d8c41"/><rect x="243" y="37" width="3" height="4" fill="#c3c6ad"/><rect x="247" y="37" width="2" height="4" fill="#c3c6ad"/><rect x="257" y="37" width="4" height="4" fill="#c3c6ad"/><rect x="266" y="37" width="1" height="4" fill="#c3c6ad"/><rect x="269" y="37" width="6" height="4" fill="#c3c6ad"/><rect x="281" y="37" width="1" height="4" fill="#c3c6ad"/><rect x="283" y="37" width="3" height="4" fill="#c3c6ad"/><rect x="286" y="37" width="2" height="4" fill="#7d8c41"/><rect x="302" y="37" width="1" height="4" fill="#7d8c41"/><rect x="303" y="37" width="7" height="4" fill="#c3c6ad"/><rect x="317" y="37" width="1" height="4" fill="#7d8c41"/><rect x="318" y="37" width="2" height="4" fill="#c3c6ad"/><rect x="322" y="37" width="2" height="4" fill="#c3c6ad"/><rect x="331" y="37" width="5" height="4" fill="#c3c6ad"/><rect x="341" y="37" width="1" height="4" fill="#c3c6ad"/><rect x="348" y="37" width="7" height="4" fill="#c3c6ad"/><rect x="363" y="37" width="7" height="4" fill="#c3c6ad"/><rect x="377" y="37" width="1" height="4" fill="#7d8c41"/><rect x="378" y="37" width="7" height="4" fill="#c3c6ad"/><rect x="392" y="37" width="1" height="4" fill="#7d8c41"/><rect x="393" y="37" width="6" height="4" fill="#c3c6ad"/><rect x="399" y="37" width="1" height="4" fill="#7d8c41"/><rect x="408" y="37" width="7" height="4" fill="#c3c6ad"/><rect x="422" y="37" width="1" height="4" fill="#7d8c41"/><rect x="423" y="37" width="2" height="4" fill="#c3c6ad"/><rect x="427" y="37" width="2" height="4" fill="#c3c6ad"/><rect x="436" y="37" width="5" height="4" fill="#c3c6ad"/><rect x="446" y="37" width="1" height="4" fill="#c3c6ad"/><rect x="448" y="37" width="3" height="4" fill="#c3c6ad"/><rect x="451" y="37" width="2" height="4" fill="#7d8c41"/><rect x="460" y="37" width="6" height="4" fill="#c3c6ad"/><rect x="466" y="37" width="1" height="4" fill="#7d8c41"/><rect x="475" y="37" width="7" height="4" fill="#c3c6ad"/><rect x="489" y="37" width="1" height="4" fill="#7d8c41"/><rect x="490" y="37" width="2" height="4" fill="#c3c6ad"/><rect x="494" y="37" width="2" height="4" fill="#c3c6ad"/><rect x="504" y="37" width="1" height="4" fill="#7d8c41"/><rect x="505" y="37" width="3" height="4" fill="#c3c6ad"/><rect x="509" y="37" width="2" height="4" fill="#c3c6ad"/><rect x="519" y="37" width="4" height="4" fill="#c3c6ad"/><rect x="533" y="37" width="5" height="4" fill="#c3c6ad"/><rect x="543" y="37" width="1" height="4" fill="#c3c6ad"/><rect x="545" y="37" width="3" height="4" fill="#c3c6ad"/><rect x="548" y="37" width="2" height="4" fill="#7d8c41"/><rect x="557" y="37" width="6" height="4" fill="#c3c6ad"/><rect x="563" y="37" width="2" height="4" fill="#7d8c41"/><rect x="573" y="37" width="1" height="4" fill="#c3c6ad"/><rect x="575" y="37" width="4" height="4" fill="#c3c6ad"/><rect x="579" y="37" width="1" height="4" fill="#7d8c41"/><rect x="587" y="37" width="7" height="4" fill="#c3c6ad"/><rect x="603" y="37" width="1" height="4" fill="#c3c6ad"/><rect x="606" y="37" width="3" height="4" fill="#c3c6ad"/><rect x="609" y="37" width="1" height="4" fill="#7d8c41"/><rect x="618" y="37" width="6" height="4" fill="#c3c6ad"/><rect x="632" y="37" width="6" height="4" fill="#c3c6ad"/><rect x="638" y="37" width="2" height="4" fill="#7d8c41"/><rect x="647" y="37" width="7" height="4" fill="#c3c6ad"/><rect x="662" y="37" width="6" height="4" fill="#c3c6ad"/><rect x="668" y="37" width="2" height="4" fill="#7d8c41"/><rect x="677" y="37" width="7" height="4" fill="#c3c6ad"/><rect x="692" y="37" width="7" height="4" fill="#c3c6ad"/><rect x="699" y="37" width="1" height="4" fill="#7d8c41"/><rect x="700" y="37" width="3" height="4" fill="#c3c6ad"/><rect x="704" y="37" width="2" height="4" fill="#c3c6ad"/><rect x="714" y="37" width="1" height="4" fill="#7d8c41"/><rect x="715" y="37" width="2" height="4" fill="#c3c6ad"/><rect x="719" y="37" width="2" height="4" fill="#c3c6ad"/><rect x="728" y="37" width="5" height="4" fill="#c3c6ad"/><rect x="738" y="37" width="1" height="4" fill="#c3c6ad"/><rect x="741" y="37" width="3" height="4" fill="#c3c6ad"/><rect x="744" y="37" width="1" height="4" fill="#7d8c41"/><rect x="759" y="37" width="4" height="4" fill="#c3c6ad"/><rect x="768" y="37" width="1" height="4" fill="#c3c6ad"/><rect x="771" y="37" width="6" height="4" fill="#c3c6ad"/><rect x="783" y="37" width="1" height="4" fill="#c3c6ad"/><rect x="785" y="37" width="3" height="4" fill="#c3c6ad"/><rect x="788" y="37" width="2" height="4" fill="#7d8c41"/><rect x="797" y="37" width="2" height="4" fill="#c3c6ad"/><rect x="804" y="37" width="4" height="4" fill="#c3c6ad"/><rect x="818" y="37" width="5" height="4" fill="#c3c6ad"/><rect x="828" y="37" width="1" height="4" fill="#c3c6ad"/><rect x="831" y="37" width="3" height="4" fill="#c3c6ad"/><rect x="834" y="37" width="1" height="4" fill="#7d8c41"/><rect x="842" y="37" width="7" height="4" fill="#c3c6ad"/><rect x="857" y="37" width="6" height="4" fill="#c3c6ad"/><rect x="871" y="37" width="3" height="4" fill="#c3c6ad"/><rect x="876" y="37" width="2" height="4" fill="#c3c6ad"/><rect x="883" y="37" width="3" height="4" fill="#c3c6ad"/><rect x="886" y="37" width="1" height="4" fill="#7d8c41"/><rect x="895" y="37" width="1" height="4" fill="#c3c6ad"/><rect x="897" y="37" width="4" height="4" fill="#c3c6ad"/><rect x="901" y="37" width="1" height="4" fill="#7d8c41"/><rect x="909" y="37" width="7" height="4" fill="#c3c6ad"/><rect x="923" y="37" width="1" height="4" fill="#7d8c41"/><rect x="924" y="37" width="7" height="4" fill="#c3c6ad"/><rect x="938" y="37" width="4" height="4" fill="#c3c6ad"/><rect x="950" y="37" width="3" height="4" fill="#c3c6ad"/><rect x="953" y="37" width="1" height="4" fill="#7d8c41"/><rect x="962" y="37" width="5" height="4" fill="#c3c6ad"/><rect x="967" y="37" width="1" height="4" fill="#7d8c41"/><rect x="976" y="37" width="7" height="4" fill="#c3c6ad"/><rect x="990" y="37" width="1" height="4" fill="#7d8c41"/><rect x="991" y="37" width="3" height="4" fill="#c3c6ad"/><rect x="995" y="37" width="2" height="4" fill="#c3c6ad"/><rect x="1006" y="37" width="7" height="4" fill="#c3c6ad"/><rect x="1021" y="37" width="6" height="4" fill="#c3c6ad"/><rect x="1035" y="37" width="1" height="4" fill="#7d8c41"/><rect x="1036" y="37" width="3" height="4" fill="#c3c6ad"/><rect x="1040" y="37" width="2" height="4" fill="#c3c6ad"/><rect x="1050" y="37" width="3" height="4" fill="#c3c6ad"/><rect x="1059" y="37" width="1" height="4" fill="#c3c6ad"/><rect x="1062" y="37" width="7" height="4" fill="#c3c6ad"/><rect x="1074" y="37" width="1" height="4" fill="#c3c6ad"/><rect x="1076" y="37" width="3" height="4" fill="#c3c6ad"/><rect x="1079" y="37" width="2" height="4" fill="#7d8c41"/><rect x="1088" y="37" width="6" height="4" fill="#c3c6ad"/><rect x="1094" y="37" width="1" height="4" fill="#7d8c41"/><rect x="1103" y="37" width="6" height="4" fill="#c3c6ad"/><rect x="1117" y="37" width="1" height="4" fill="#7d8c41"/><rect x="1118" y="37" width="1" height="4" fill="#c3c6ad"/></svg>
<div class="abs" style="left:787px;top:871px;width:4px;height:41px;background:#f8f8f8"></div>

<!-- ===== Right panel ===== -->
<div class="panel" style="left:1224px;top:138px;width:399px;height:859px"></div>
<div class="bg" style="left:1225px;top:139px;width:397px;height:36px;border-radius:3px 3px 0 0"></div>
<div class="tabline" style="left:1225px;top:175px;width:397px"></div>
<div class="bg" style="left:1227px;top:178px;width:393px;height:815px"></div>
<div class="tab" style="left:1225px;top:139px;width:84px;height:38px;background:#fff;border-radius:4px 4px 0 0"></div>
<div class="tab" style="left:1309px;top:139px;width:88px;height:36px"></div>
<svg class="abs" style="left:1228px;top:147px" width="104" height="20" viewBox="1228 147 104 20">
<path d="M1232.4 151.5 V162" stroke="#333" stroke-width="1"/>
<circle cx="1232.5" cy="151" r="1.9" fill="#9cc8fa" stroke="#3a78c8" stroke-width=".9"/>
<circle cx="1232.5" cy="156.7" r="2.3" fill="#0b7a3a" stroke="#064a22" stroke-width=".6"/>
<circle cx="1232.5" cy="162.6" r="2.1" fill="#c49a68" stroke="#7e5c34" stroke-width=".6"/>
<path d="M1238.1 151.7 H1240.7 V158.8 H1242.7 L1239.4 162.3 L1236.1 158.8 H1238.1Z" fill="#000"/>
<!-- statistics -->
<rect x="1313" y="149.3" width="15.6" height="15.4" fill="#efefee" stroke="#9a9a98" stroke-width=".6"/>
<path d="M1313 154.4 H1328.6 M1313 159.6 H1328.6 M1324.6 149.3 V164.7 M1317.4 149.3 V164.7" stroke="#a4a4a2" stroke-width=".6"/>
<rect x="1313" y="149.3" width="4.4" height="5.1" fill="#00e6f2"/>
<rect x="1313" y="154.4" width="4.4" height="5.2" fill="#9322e6"/>
<rect x="1313" y="159.6" width="4.4" height="5.1" fill="#f8f400"/>
<path d="M1318.6 151.8 H1322.6 M1318.6 157 H1322.6 M1318.6 162.2 H1322.6 M1325.8 151.8 H1327.4 M1325.8 157 H1327.4 M1325.8 162.2 H1327.4" stroke="#8a8a88" stroke-width=".8"/>
</svg><svg class="abs" style="left:1567px;top:150px" width="41" height="13" viewBox="1567 150 41 13">
<rect x="1568.5" y="151.5" width="9" height="3" fill="#fff" stroke="#000"/>
<rect x="1596.5" y="151.5" width="9" height="9" fill="#fff" stroke="#000"/><rect x="1596" y="153" width="10" height="1" fill="#000"/></svg>
<div class="t" style="left:1248px;top:149px">Call Path</div>
<div class="t" style="left:1333px;top:149px;color:#3a3a3a">Statistics</div>

<!-- spinner -->
<div class="abs" style="left:1357px;top:183px;width:114px;height:26px;background:#fff"></div>
<div class="t" style="left:1364px;top:187px">29</div>
<div class="abs" style="left:1471px;top:184px;width:16px;height:22px;border:1px solid #b0b0af;border-left:none;border-radius:0 4px 4px 0;background:linear-gradient(#f1f1f0 50%,#fff 50%)"></div>
<div class="abs" style="left:1471px;top:196px;width:16px;height:1px;background:#d4d4d3"></div>
<svg class="abs" style="left:1474px;top:186px" width="12" height="20" viewBox="0 0 12 20">
 <path d="M1.6 6.4 L6 2 L10.4 6.4Z" fill="#9a9a9a"/>
 <path d="M1.6 13.8 L6 18.2 L10.4 13.8Z" fill="#1e1e1e"/>
</svg>

<!-- call path list -->
<div class="abs" style="left:1232px;top:214px;width:383px;height:648px;background:#fff"></div>
<div class="abs" style="left:1602px;top:214px;width:13px;height:648px;background:#c4c6c5"></div>
<div class="abs" style="left:1606px;top:217px;width:6px;height:602px;border-radius:3px;background:#7a7f7f"></div>
<div class="sq" style="top:221px;background:#18b93a"></div><div class="li" style="top:217px">&lt;program root&gt;</div>
<div class="sq" style="top:244px;background:#7f8f35"></div><div class="li" style="top:240px">main</div>
<div class="sq" style="top:267px;background:#c030b0"></div><div class="li" style="top:263px">[I] inlined from main.c: 44</div>
<div class="sq" style="top:290px;background:#1f9e3a"></div><div class="li" style="top:286px">target_3d</div>
<div class="sq" style="top:313px;background:#6b5a6b"></div><div class="li" style="top:309px">target_pml_3d</div>
<div class="sq" style="top:336px;background:#2e1452"></div><div class="li" style="top:332px">__pgi_uacc_launch</div>
<div class="sq" style="top:359px;background:#5f9fc0"></div><div class="li" style="top:355px">__pgi_uacc_cuda_launch</div>
<div class="sq" style="top:382px;background:#9aa648"></div><div class="li" style="top:378px">__pgi_uacc_cuda_launch3</div>
<div class="sq" style="top:405px;background:#222420"></div><div class="li" style="top:401px">&lt;gpu kernel&gt;</div>
<div class="sq" style="top:428px;background:#c3c6ad"></div><div class="li" style="top:424px">target_pml_3d_46_gpu</div>
<div class="dash" style="top:447px">--------------</div>
<div class="dash" style="top:470px">--------------</div>
<div class="dash" style="top:493px">--------------</div>
<div class="dash" style="top:516px">--------------</div>
<div class="dash" style="top:539px">--------------</div>
<div class="dash" style="top:562px">--------------</div>
<div class="dash" style="top:585px">--------------</div>
<div class="dash" style="top:608px">--------------</div>
<div class="dash" style="top:631px">--------------</div>
<div class="dash" style="top:654px">--------------</div>
<div class="dash" style="top:677px">--------------</div>
<div class="dash" style="top:700px">--------------</div>
<div class="dash" style="top:723px">--------------</div>
<div class="dash" style="top:746px">--------------</div>
<div class="dash" style="top:769px">--------------</div>
<div class="dash" style="top:792px">--------------</div>
<div class="dash" style="top:815px">--------------</div>
<div class="dash" style="top:838px">--------------</div>

<div class="t" style="left:1232px;top:867px;color:#2e2e2e">Mini Map</div>
<svg class="abs" style="left:1353px;top:889px" width="140" height="100">
 <defs><pattern id="h" width="15" height="15" patternUnits="userSpaceOnUse"><rect width="15" height="15" fill="#818181"/><path d="M-1 7L7 -1M-1 12L12 -1M5 16L16 5M10 16L16 10" stroke="#303030" stroke-width="1.25" fill="none"/></pattern></defs>
 <rect x="0" y="0" width="97" height="100" fill="url(#h)"/>
 <rect x="97" y="0" width="14" height="100" fill="#fff"/>
 <rect x="111" y="0" width="29" height="100" fill="url(#h)"/>
</svg>

<!-- status bar -->
<div class="abs" style="left:1155px;top:998px;width:53px;height:34px;background:#333333"></div>
<div class="t" style="left:1175px;top:1006px;color:#f6f6f6;letter-spacing:-.15px">162M of 385M</div>
<div class="abs" style="left:1150.5px;top:1002px;width:0;height:25px;border-left:1.5px dashed #a9a28f"></div>
<div class="abs" style="left:1302.5px;top:1002px;width:0;height:25px;border-left:1.5px dashed #a9a28f"></div>
<div class="abs" style="left:1283px;top:998px;width:1px;height:34px;background:#c6c6c5"></div>
<div class="abs" style="left:1300px;top:998px;width:1px;height:34px;background:#fbfbfb"></div>
<svg class="abs" style="left:1285px;top:1006px" width="15" height="18" viewBox="1285 1006 15 18">
<defs><linearGradient id="tg" x1="0" x2="1" y1="0" y2="0"><stop offset="0" stop-color="#1f6fc4"/><stop offset=".5" stop-color="#d8d848"/><stop offset="1" stop-color="#1f6fc4"/></linearGradient></defs>
<path d="M1287.2 1010.8 H1297.2 L1296.3 1021 Q1296.2 1022 1295.2 1022 H1289.2 Q1288.2 1022 1288.1 1021Z" fill="url(#tg)" stroke="#1c63b4" stroke-width=".8"/>
<path d="M1290 1012 V1020.8 M1292.2 1012 V1020.8 M1294.4 1012 V1020.8" stroke="#2a78cc" stroke-width=".8" stroke-opacity=".75"/>
<rect x="1286.2" y="1008.6" width="12" height="2.4" rx="1" fill="#3a8ee0" stroke="#1c63b4" stroke-width=".6"/>
<rect x="1290.4" y="1007.2" width="3.6" height="1.6" rx=".5" fill="#1c63b4"/>
</svg>

<!-- second hidden window strip -->
<div class="chk" style="left:210px;top:1035px;width:1315px;height:14px"></div>
<div class="abs" style="left:213px;top:1035px;width:1309px;height:11px;background:#fff"></div>
<div class="abs" style="left:215px;top:1035px;width:1290px;height:9px;background:#000"></div>
<div class="abs" style="left:224px;top:1035px;width:1px;height:9px;background:#fff"></div>
<div class="abs" style="left:1505px;top:1035px;width:15px;height:9px;background:linear-gradient(90deg,#fafafa,#ecebea);border-radius:0 0 3px 3px;border:1px solid #a3a2a0;border-top:none;box-sizing:border-box"></div>
<svg class="abs" style="left:1507px;top:1035px" width="11" height="5" viewBox="0 0 11 5"><path d="M2.4 -.4 L5.5 2.6 L8.6 -.4" fill="none" stroke="#a9a6a3" stroke-width="1.3"/></svg>
</div></body></html>
